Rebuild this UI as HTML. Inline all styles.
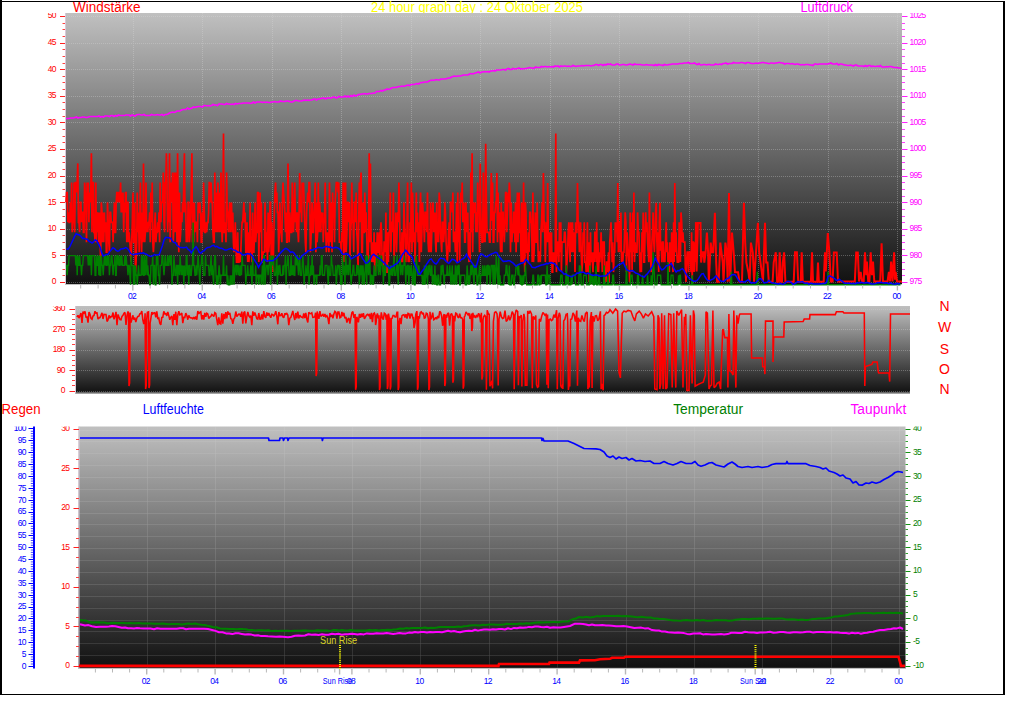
<!DOCTYPE html>
<html lang="de"><head><meta charset="utf-8"><title>24 hour graph day : 24 Oktober 2025</title>
<style>html,body{margin:0;padding:0;background:#fff}svg{display:block}text{font-family:"Liberation Sans", Arial, sans-serif}</style>
</head><body>
<svg width="1024" height="705" viewBox="0 0 1024 705">
<defs>
<linearGradient id="g1" x1="0" y1="0" x2="0" y2="1"><stop offset="0" stop-color="#c0c0c0"/><stop offset="1" stop-color="#101010"/></linearGradient>
<clipPath id="c1"><rect x="65" y="13" width="837" height="273.2"/></clipPath>
<clipPath id="c2"><rect x="75" y="306" width="835" height="88"/></clipPath>
<clipPath id="c3"><rect x="78.5" y="426" width="827" height="243"/></clipPath>
</defs>
<rect width="1024" height="705" fill="#fff"/>
<rect x="0" y="0" width="2" height="695" fill="#000"/>
<rect x="0" y="1" width="1005" height="1" fill="#000"/>
<rect x="1003" y="1" width="2" height="694" fill="#000"/>
<rect x="0" y="694" width="1005" height="1" fill="#000"/>
<text x="73" y="12" fill="#ff0000" font-size="14" text-anchor="start" textLength="67.5" lengthAdjust="spacingAndGlyphs">Windstärke</text>
<text x="371" y="12" fill="#ffff00" font-size="14" text-anchor="start" textLength="212" lengthAdjust="spacingAndGlyphs">24 hour graph day : 24 Oktober 2025</text>
<text x="800.5" y="12" fill="#ff00ff" font-size="14" text-anchor="start" textLength="52.5" lengthAdjust="spacingAndGlyphs">Luftdruck</text>
<rect x="65" y="13" width="837" height="271.5" fill="url(#g1)"/>
<g stroke="#e0e0e0" stroke-width="1" stroke-dasharray="1 1" opacity="0.3">
<line x1="65" y1="282.5" x2="902" y2="282.5"/>
<line x1="65" y1="255.5" x2="902" y2="255.5"/>
<line x1="65" y1="229.5" x2="902" y2="229.5"/>
<line x1="65" y1="202.5" x2="902" y2="202.5"/>
<line x1="65" y1="176.5" x2="902" y2="176.5"/>
<line x1="65" y1="149.5" x2="902" y2="149.5"/>
<line x1="65" y1="122.5" x2="902" y2="122.5"/>
<line x1="65" y1="96.5" x2="902" y2="96.5"/>
<line x1="65" y1="69.5" x2="902" y2="69.5"/>
<line x1="65" y1="43.5" x2="902" y2="43.5"/>
<line x1="65" y1="16.5" x2="902" y2="16.5"/>
<line x1="133.5" y1="13" x2="133.5" y2="284.5"/>
<line x1="202.5" y1="13" x2="202.5" y2="284.5"/>
<line x1="272.5" y1="13" x2="272.5" y2="284.5"/>
<line x1="341.5" y1="13" x2="341.5" y2="284.5"/>
<line x1="411.5" y1="13" x2="411.5" y2="284.5"/>
<line x1="480.5" y1="13" x2="480.5" y2="284.5"/>
<line x1="550.5" y1="13" x2="550.5" y2="284.5"/>
<line x1="619.5" y1="13" x2="619.5" y2="284.5"/>
<line x1="689.5" y1="13" x2="689.5" y2="284.5"/>
<line x1="758.5" y1="13" x2="758.5" y2="284.5"/>
<line x1="828.5" y1="13" x2="828.5" y2="284.5"/>
<line x1="897.5" y1="13" x2="897.5" y2="284.5"/>
</g>
<line x1="65.5" y1="13" x2="65.5" y2="284.5" stroke="#d8c8d8" stroke-width="1"/>
<line x1="65" y1="284.5" x2="902" y2="284.5" stroke="#c0c0c0" stroke-width="1"/>
<g clip-path="url(#c1)" fill="none" stroke-linejoin="miter" stroke-miterlimit="3">
<polyline points="66,118.5 67.5,118.5 69,118.5 70.5,118 72,118 73.5,118 75,117.5 76.5,117 78,118 79.5,117.5 81,117.5 82.5,117 84,117 85.5,117.5 87,117.5 88.5,117 90,116.5 91.5,116.5 93,116.5 94.5,116.5 96,116.5 97.5,116.5 99,116 100.5,117 102,116.5 103.5,117 105,116 106.5,116 108,116 109.5,116.5 111,115.5 112.5,115.5 114,116.5 115.5,115.5 117,116 118.5,115 120,115.5 121.5,115.5 123,115.5 124.5,115.5 126,115 127.5,115 129,115 130.5,116 132,115 133.5,115.5 135,116 136.5,115 138,114.5 139.5,114.5 141,115 142.5,115 144,114.5 145.5,115.5 147,115.5 148.5,115.5 150,115.5 151.5,114.5 153,115 154.5,115 156,115 157.5,114.5 159,115 160.5,115 162,114.5 163.5,115.5 165,114.5 166.5,114.5 168,114 169.5,113 171,112.5 172.5,112 174,112.5 175.5,112 177,111 178.5,111 180,111 181.5,110 183,109.5 184.5,109.5 186,109.5 187.5,108 189,109 190.5,108.5 192,108 193.5,107 195,107.5 196.5,107 198,106.5 199.5,106.5 201,106.5 202.5,107 204,105.5 205.5,105.5 207,106 208.5,105.5 210,106 211.5,105.5 213,104.5 214.5,105 216,105 217.5,105.5 219,104 220.5,104 222,104 223.5,104.5 225,104.5 226.5,103.5 228,104 229.5,104 231,104.5 232.5,104 234,104.5 235.5,103.5 237,104 238.5,103.5 240,103.5 241.5,103.5 243,103 244.5,103 246,103 247.5,103 249,103 250.5,103.5 252,103 253.5,102 255,103 256.5,102 258,102 259.5,102 261,102 262.5,102.5 264,102 265.5,102.5 267,102 268.5,102.5 270,102.5 271.5,102 273,102 274.5,101.5 276,102 277.5,102 279,102 280.5,101 282,101.5 283.5,101.5 285,101.5 286.5,101 288,101 289.5,101.5 291,102 292.5,102 294,101 295.5,100.5 297,100.5 298.5,101 300,101 301.5,101 303,100.5 304.5,100 306,100.5 307.5,100 309,100.5 310.5,100 312,100 313.5,99 315,99 316.5,100 318,99 319.5,99 321,98.5 322.5,98 324,98 325.5,99 327,98 328.5,98 330,98 331.5,98 333,97 334.5,97 336,98 337.5,97.5 339,96.5 340.5,97 342,97 343.5,97 345,96 346.5,97 348,96 349.5,97 351,95.5 352.5,96.5 354,95 355.5,96 357,95.5 358.5,94.5 360,94.5 361.5,94 363,94 364.5,93.5 366,94 367.5,94 369,93.5 370.5,93.5 372,93.5 373.5,93 375,93 376.5,91.5 378,91.5 379.5,91.5 381,90.5 382.5,91 384,90 385.5,90 387,89 388.5,89.5 390,89 391.5,88 393,87.5 394.5,87.5 396,87.5 397.5,87 399,86.5 400.5,86.5 402,86 403.5,86.5 405,86 406.5,85.5 408,85 409.5,85.5 411,84.5 412.5,84.5 414,84.5 415.5,84 417,83.5 418.5,84 420,83 421.5,82.5 423,82.5 424.5,82 426,82 427.5,82 429,81 430.5,80.5 432,80 433.5,80.5 435,80 436.5,79.5 438,80 439.5,80 441,79 442.5,79 444,79 445.5,79 447,78.5 448.5,78 450,78 451.5,77 453,76.5 454.5,76 456,76.5 457.5,76 459,76 460.5,76 462,75.5 463.5,75 465,75 466.5,75 468,75 469.5,74 471,73.5 472.5,74 474,73.5 475.5,73 477,72.5 478.5,72 480,73 481.5,72 483,72 484.5,71.5 486,72 487.5,71.5 489,72 490.5,71 492,71 493.5,70.5 495,71 496.5,70 498,70 499.5,70 501,70 502.5,69.5 504,69.5 505.5,70 507,69 508.5,68.5 510,69.5 511.5,69.5 513,68.5 514.5,69 516,69 517.5,68.5 519,68 520.5,69 522,68.5 523.5,69 525,68.5 526.5,68.5 528,68 529.5,67.5 531,68 532.5,68 534,68.5 535.5,67 537,67.5 538.5,67.5 540,67.5 541.5,66.5 543,67 544.5,66.5 546,66.5 547.5,67 549,66.5 550.5,67 552,66.5 553.5,67 555,66 556.5,66.5 558,66 559.5,67 561,66 562.5,66.5 564,66 565.5,66 567,66.5 568.5,66 570,66.5 571.5,66.5 573,65.5 574.5,66 576,66.5 577.5,66 579,66 580.5,66 582,65.5 583.5,66 585,65.5 586.5,65.5 588,65.5 589.5,65.5 591,66 592.5,65.5 594,65.5 595.5,64.5 597,64.5 598.5,65.5 600,64.5 601.5,64.5 603,65.5 604.5,64.5 606,65 607.5,64 609,64.5 610.5,64 612,65 613.5,65 615,65 616.5,64 618,64 619.5,65 621,65 622.5,64.5 624,64.5 625.5,65 627,65 628.5,64.5 630,64 631.5,64.5 633,65 634.5,64 636,64.5 637.5,64.5 639,64.5 640.5,64.5 642,65 643.5,65 645,65 646.5,64.5 648,65 649.5,65 651,65 652.5,65 654,65.5 655.5,64.5 657,65.5 658.5,64.5 660,65 661.5,65 663,65.5 664.5,64.5 666,65 667.5,65 669,64.5 670.5,64.5 672,64 673.5,64 675,64 676.5,64 678,64 679.5,63.5 681,63.5 682.5,63.5 684,63 685.5,63 687,63 688.5,62.5 690,63.5 691.5,63.5 693,63.5 694.5,63 696,64 697.5,64.5 699,63.5 700.5,65 702,65 703.5,64.5 705,64.5 706.5,65 708,64.5 709.5,64.5 711,65 712.5,65 714,65 715.5,64 717,64.5 718.5,64.5 720,64 721.5,64.5 723,63.5 724.5,63.5 726,63 727.5,64 729,63.5 730.5,63.5 732,63.5 733.5,62.5 735,63 736.5,63 738,63 739.5,63 741,62.5 742.5,62.5 744,63 745.5,63.5 747,62.5 748.5,62.5 750,63 751.5,63.5 753,63.5 754.5,63.5 756,63 757.5,63.5 759,63 760.5,63 762,62.5 763.5,62.5 765,63 766.5,63 768,63.5 769.5,63.5 771,63 772.5,63 774,63.5 775.5,63 777,63 778.5,62.5 780,62.5 781.5,63 783,63 784.5,64 786,63.5 787.5,63.5 789,63.5 790.5,64 792,63.5 793.5,64 795,64.5 796.5,64 798,64 799.5,64.5 801,65 802.5,64.5 804,65 805.5,64.5 807,64.5 808.5,64.5 810,65 811.5,65 813,65.5 814.5,64 816,64 817.5,64.5 819,64 820.5,64 822,64 823.5,64 825,64 826.5,64 828,64 829.5,63.5 831,63 832.5,64 834,64 835.5,64 837,63.5 838.5,65 840,64 841.5,64 843,64.5 844.5,65 846,65 847.5,65.5 849,65.5 850.5,65 852,65.5 853.5,66 855,65 856.5,65 858,66 859.5,66 861,66 862.5,66 864,66.5 865.5,65.5 867,66.5 868.5,65.5 870,65.5 871.5,66.5 873,66 874.5,66.5 876,66.5 877.5,66 879,66.5 880.5,65.5 882,67 883.5,67 885,67 886.5,66.5 888,67 889.5,66.5 891,66.5 892.5,67 894,67.5 895.5,67.5 897,67.5 898.5,68 900,68 901.5,68.5" stroke="#ff00ff" stroke-width="1.6"/>
<polyline points="66,202.4 66.6,192.5 67.2,192.5 67.9,222.3 68.5,212.4 69.1,222.3 69.7,222.3 70.3,202.4 71,222.3 71.6,182.5 72.2,232.3 72.8,222.3 73.4,222.3 74.1,182.5 74.7,232.3 75.3,182.5 75.9,182.5 76.5,192.5 77.2,182.5 77.8,163.4 78.4,222.3 79,222.3 79.6,232.3 80.3,202.4 80.9,202.4 81.5,222.3 82.1,212.4 82.7,212.4 83.4,232.3 84,232.3 84.6,182.5 85.2,192.5 85.8,202.4 86.5,242.2 87.1,182.5 87.7,202.4 88.3,182.5 88.9,222.3 89.6,192.5 90.2,202.4 90.8,192.5 91.4,153.3 92,232.3 92.7,182.5 93.3,182.5 93.9,232.3 94.5,232.3 95.1,242.2 95.8,182.5 96.4,242.2 97,212.4 97.6,232.3 98.2,212.4 98.9,242.2 99.5,212.4 100.1,242.2 100.7,262.1 101.3,202.4 102,212.4 102.6,242.2 103.2,212.4 103.8,242.2 104.4,212.4 105.1,232.3 105.7,222.3 106.3,252.2 106.9,252.2 107.5,202.4 108.2,222.3 108.8,242.2 109.4,252.2 110,212.4 110.6,212.4 111.3,222.3 111.9,222.3 112.5,222.3 113.1,242.2 113.7,222.3 114.4,202.4 115,232.3 115.6,232.3 116.2,202.4 116.8,192.5 117.5,192.5 118.1,202.4 118.7,192.5 119.3,192.5 119.9,202.4 120.6,182.5 121.2,212.4 121.8,192.5 122.4,212.4 123,192.5 123.7,232.3 124.3,202.4 124.9,212.4 125.5,192.5 126.1,192.5 126.8,242.2 127.4,202.4 128,202.4 128.6,242.2 129.2,232.3 129.9,242.2 130.5,252.2 131.1,262.1 131.7,242.2 132.3,222.3 133,192.5 133.6,242.2 134.2,242.2 134.8,202.4 135.4,272.1 136.1,262.1 136.7,242.2 137.3,192.5 137.9,232.3 138.5,212.4 139.2,252.2 139.8,222.3 140.4,182.5 141,232.3 141.6,252.2 142.3,212.4 142.9,242.2 143.5,163.4 144.1,232.3 144.7,242.2 145.4,232.3 146,182.5 146.6,232.3 147.2,222.3 147.8,232.3 148.5,222.3 149.1,222.3 149.7,212.4 150.3,242.2 150.9,192.5 151.6,222.3 152.2,182.5 152.8,242.2 153.4,252.2 154,242.2 154.7,222.3 155.3,212.4 155.9,242.2 156.5,232.3 157.1,232.3 157.8,222.3 158.4,232.3 159,212.4 159.6,242.2 160.2,182.5 160.9,222.3 161.5,202.4 162.1,202.4 162.7,202.4 163.3,172.6 164,222.3 164.6,232.3 165.2,182.5 165.8,182.5 166.4,153.3 167.1,192.5 167.7,232.3 168.3,202.4 168.9,222.3 169.5,153.3 170.2,242.2 170.8,182.5 171.4,202.4 172,192.5 172.6,172.6 173.3,242.2 173.9,222.3 174.5,172.6 175.1,232.3 175.7,172.6 176.4,202.4 177,242.2 177.6,153.3 178.2,222.3 178.8,252.2 179.5,192.5 180.1,242.2 180.7,232.3 181.3,212.4 181.9,222.3 182.6,202.4 183.2,212.4 183.8,182.5 184.4,153.3 185,212.4 185.7,202.4 186.3,242.2 186.9,232.3 187.5,242.2 188.1,202.4 188.8,202.4 189.4,242.2 190,232.3 190.6,212.4 191.2,192.5 191.9,153.3 192.5,242.2 193.1,202.4 193.7,242.2 194.3,202.4 195,232.3 195.6,222.3 196.2,222.3 196.8,222.3 197.4,242.2 198.1,202.4 198.7,212.4 199.3,212.4 199.9,202.4 200.5,212.4 201.2,242.2 201.8,242.2 202.4,212.4 203,232.3 203.6,182.5 204.3,212.4 204.9,232.3 205.5,232.3 206.1,222.3 206.7,232.3 207.4,222.3 208,222.3 208.6,212.4 209.2,182.5 209.8,182.5 210.5,202.4 211.1,182.5 211.7,202.4 212.3,202.4 212.9,232.3 213.6,242.2 214.2,242.2 214.8,172.6 215.4,222.3 216,232.3 216.7,192.5 217.3,232.3 217.9,182.5 218.5,212.4 219.1,232.3 219.8,192.5 220.4,232.3 221,172.6 221.6,222.3 222.2,242.2 222.9,212.4 223.5,133.6 224.1,232.3 224.7,232.3 225.3,222.3 226,242.2 226.6,172.6 227.2,212.4 227.8,212.4 228.4,232.3 229.1,212.4 229.7,202.4 230.3,232.3 230.9,212.4 231.5,202.4 232.2,232.3 232.8,212.4 233.4,242.2 234,252.2 234.6,242.2 235.3,222.3 235.9,242.2 236.5,262.1 237.1,262.1 237.7,232.3 238.4,262.1 239,262.1 239.6,252.2 240.2,262.1 240.8,252.2 241.5,232.3 242.1,222.3 242.7,222.3 243.3,212.4 243.9,202.4 244.6,222.3 245.2,212.4 245.8,252.2 246.4,252.2 247,222.3 247.7,262.1 248.3,232.3 248.9,262.1 249.5,252.2 250.1,202.4 250.8,252.2 251.4,242.2 252,262.1 252.6,212.4 253.2,252.2 253.9,252.2 254.5,232.3 255.1,202.4 255.7,242.2 256.3,232.3 257,232.3 257.6,192.5 258.2,192.5 258.8,262.1 259.4,232.3 260.1,192.5 260.7,232.3 261.3,202.4 261.9,262.1 262.5,262.1 263.2,252.2 263.8,252.2 264.4,252.2 265,202.4 265.6,222.3 266.3,252.2 266.9,232.3 267.5,262.1 268.1,212.4 268.7,252.2 269.4,242.2 270,202.4 270.6,202.4 271.2,262.1 271.8,222.3 272.5,242.2 273.1,272.1 273.7,242.2 274.3,212.4 274.9,192.5 275.6,182.5 276.2,202.4 276.8,192.5 277.4,212.4 278,212.4 278.7,252.2 279.3,232.3 279.9,202.4 280.5,232.3 281.1,232.3 281.8,242.2 282.4,202.4 283,182.5 283.6,192.5 284.2,202.4 284.9,212.4 285.5,232.3 286.1,212.4 286.7,242.2 287.3,242.2 288,163.4 288.6,202.4 289.2,242.2 289.8,212.4 290.4,222.3 291.1,232.3 291.7,232.3 292.3,182.5 292.9,212.4 293.5,232.3 294.2,212.4 294.8,182.5 295.4,222.3 296,212.4 296.6,232.3 297.3,212.4 297.9,232.3 298.5,242.2 299.1,212.4 299.7,172.9 300.4,212.4 301,202.4 301.6,222.3 302.2,182.5 302.8,192.5 303.5,182.5 304.1,202.4 304.7,222.3 305.3,242.2 305.9,252.2 306.6,212.4 307.2,202.4 307.8,192.5 308.4,202.4 309,182.5 309.7,182.5 310.3,252.2 310.9,242.2 311.5,222.3 312.1,202.4 312.8,232.3 313.4,232.3 314,212.4 314.6,202.4 315.2,182.5 315.9,252.2 316.5,202.4 317.1,242.2 317.7,232.3 318.3,182.5 319,232.3 319.6,202.4 320.2,212.4 320.8,232.3 321.4,212.4 322.1,222.3 322.7,212.4 323.3,242.2 323.9,222.3 324.5,222.3 325.2,182.5 325.8,232.3 326.4,252.2 327,232.3 327.6,242.2 328.3,232.3 328.9,252.2 329.5,182.5 330.1,222.3 330.7,242.2 331.4,202.4 332,252.2 332.6,192.5 333.2,212.4 333.8,202.4 334.5,242.2 335.1,202.4 335.7,192.5 336.3,182.5 336.9,182.5 337.6,182.5 338.2,192.5 338.8,182.5 339.4,242.2 340,242.2 340.7,242.2 341.3,252.2 341.9,232.3 342.5,242.2 343.1,182.5 343.8,262.1 344.4,182.5 345,252.2 345.6,182.5 346.2,252.2 346.9,232.3 347.5,202.4 348.1,202.4 348.7,222.3 349.3,202.4 350,262.1 350.6,232.3 351.2,222.3 351.8,182.5 352.4,222.3 353.1,222.3 353.7,252.2 354.3,202.4 354.9,202.4 355.5,222.3 356.2,192.5 356.8,232.3 357.4,242.2 358,272.1 358.6,232.3 359.3,182.5 359.9,222.3 360.5,182.5 361.1,172.6 361.7,252.2 362.4,252.2 363,202.4 363.6,232.3 364.2,232.3 364.8,192.5 365.5,232.3 366.1,212.4 366.7,232.3 367.3,262.1 367.9,262.1 368.6,242.2 369.2,153.3 369.8,242.2 370.4,163.4 371,232.3 371.7,262.1 372.3,242.2 372.9,252.2 373.5,262.1 374.1,232.3 374.8,272.1 375.4,242.2 376,262.1 376.6,262.1 377.2,232.3 377.9,252.2 378.5,252.2 379.1,232.3 379.7,272.1 380.3,232.3 381,222.3 381.6,232.3 382.2,262.1 382.8,252.2 383.4,272.1 384.1,242.2 384.7,242.2 385.3,252.2 385.9,212.4 386.5,272.1 387.2,272.1 387.8,232.3 388.4,262.1 389,232.3 389.6,232.3 390.3,192.5 390.9,252.2 391.5,222.3 392.1,222.3 392.7,232.3 393.4,192.5 394,262.1 394.6,242.2 395.2,242.2 395.8,212.4 396.5,252.2 397.1,232.3 397.7,212.4 398.3,222.3 398.9,182.5 399.6,212.4 400.2,252.2 400.8,242.2 401.4,262.1 402,232.3 402.7,262.1 403.3,252.2 403.9,202.4 404.5,222.3 405.1,232.3 405.8,262.1 406.4,242.2 407,232.3 407.6,182.5 408.2,262.1 408.9,252.2 409.5,262.1 410.1,222.3 410.7,242.2 411.3,182.5 412,252.2 412.6,192.5 413.2,222.3 413.8,242.2 414.4,232.3 415.1,262.1 415.7,232.3 416.3,192.5 416.9,232.3 417.5,212.4 418.2,242.2 418.8,222.3 419.4,262.1 420,212.4 420.6,192.5 421.3,252.2 421.9,232.3 422.5,202.4 423.1,212.4 423.7,222.3 424.4,242.2 425,212.4 425.6,212.4 426.2,222.3 426.8,232.3 427.5,192.5 428.1,242.2 428.7,252.2 429.3,232.3 429.9,252.2 430.6,202.4 431.2,252.2 431.8,232.3 432.4,212.4 433,202.4 433.7,232.3 434.3,222.3 434.9,212.4 435.5,242.2 436.1,252.2 436.8,202.4 437.4,242.2 438,222.3 438.6,242.2 439.2,192.5 439.9,202.4 440.5,232.3 441.1,242.2 441.7,252.2 442.3,222.3 443,222.3 443.6,242.2 444.2,232.3 444.8,202.4 445.4,212.4 446.1,242.2 446.7,252.2 447.3,262.1 447.9,252.2 448.5,232.3 449.2,222.3 449.8,252.2 450.4,202.4 451,202.4 451.6,202.4 452.3,212.4 452.9,192.5 453.5,242.2 454.1,232.3 454.7,232.3 455.4,252.2 456,232.3 456.6,202.4 457.2,262.1 457.8,192.5 458.5,242.2 459.1,232.3 459.7,262.1 460.3,202.4 460.9,192.5 461.6,202.4 462.2,182.5 462.8,222.3 463.4,212.4 464,202.4 464.7,242.2 465.3,242.2 465.9,202.4 466.5,222.3 467.1,232.3 467.8,212.4 468.4,252.2 469,262.1 469.6,232.3 470.2,262.1 470.9,172.6 471.5,232.3 472.1,153.3 472.7,252.2 473.3,202.4 474,212.4 474.6,212.4 475.2,202.4 475.8,232.3 476.4,212.4 477.1,232.3 477.7,182.5 478.3,212.4 478.9,202.4 479.5,252.2 480.2,163.4 480.8,211.2 481.4,232.3 482,242.2 482.6,242.2 483.3,172.6 483.9,242.2 484.5,212.4 485.1,242.2 485.7,143.7 486.4,202.4 487,232.3 487.6,232.3 488.2,232.3 488.8,232.3 489.5,242.2 490.1,242.2 490.7,212.4 491.3,172.9 491.9,220.8 492.6,182.5 493.2,242.2 493.8,242.2 494.4,212.4 495,212.4 495.7,202.4 496.3,202.4 496.9,172.9 497.5,242.2 498.1,192.5 498.8,232.3 499.4,212.4 500,232.3 500.6,252.2 501.2,202.4 501.9,252.2 502.5,212.4 503.1,212.4 503.7,232.3 504.3,242.2 505,222.3 505.6,192.5 506.2,192.5 506.8,232.3 507.4,212.4 508.1,192.5 508.7,202.4 509.3,182.5 509.9,192.5 510.5,252.2 511.2,202.4 511.8,242.2 512.4,232.3 513,232.3 513.6,212.4 514.3,212.4 514.9,242.2 515.5,202.4 516.1,252.2 516.7,222.3 517.4,192.5 518,242.2 518.6,212.4 519.2,192.5 519.8,232.3 520.5,232.3 521.1,262.1 521.7,202.4 522.3,232.3 522.9,262.1 523.6,182.5 524.2,252.2 524.8,272.1 525.4,202.4 526,212.4 526.7,252.2 527.3,252.2 527.9,262.1 528.5,232.3 529.1,252.2 529.8,212.4 530.4,212.4 531,222.3 531.6,222.3 532.2,262.1 532.9,192.6 533.5,262.1 534.1,252.2 534.7,232.3 535.3,212.4 536,242.2 536.6,242.2 537.2,202.4 537.8,242.2 538.4,262.1 539.1,252.2 539.7,252.2 540.3,262.1 540.9,232.3 541.5,222.3 542.2,202.4 542.8,232.3 543.4,172.9 544,220.8 544.6,222.3 545.3,262.1 545.9,242.2 546.5,222.3 547.1,242.2 547.7,183 548.4,242.2 549,232.3 549.6,262.1 550.2,232.3 550.8,262.1 551.5,232.3 552.1,272.1 552.7,272.1 553.3,252.2 553.9,262.1 554.6,252.2 555.2,262.1 555.8,133.6 556.4,272.1 557,252.2 557.7,242.2 558.3,242.2 558.9,262.1 559.5,222.3 560.1,252.2 560.8,222.3 561.4,272.1 562,242.2 562.6,242.2 563.2,242.2 563.9,242.2 564.5,232.3 565.1,232.3 565.7,242.2 566.3,272.1 567,262.1 567.6,252.2 568.2,232.3 568.8,222.3 569.4,242.2 570.1,262.1 570.7,222.3 571.3,232.3 571.9,252.2 572.5,222.3 573.2,252.2 573.8,242.2 574.4,232.3 575,272.1 575.6,222.3 576.3,232.3 576.9,232.3 577.5,183 578.1,222.3 578.7,222.3 579.4,252.2 580,242.2 580.6,222.3 581.2,252.2 581.8,272.1 582.5,262.1 583.1,232.3 583.7,242.2 584.3,222.3 584.9,262.1 585.6,262.1 586.2,272.1 586.8,262.1 587.4,222.3 588,272.1 588.7,242.2 589.3,282 589.9,272.1 590.5,232.3 591.1,262.1 591.8,252.2 592.4,262.1 593,272.1 593.6,252.2 594.2,262.1 594.9,232.3 595.5,232.3 596.1,262.1 596.7,222.3 597.3,272.1 598,242.2 598.6,272.1 599.2,252.2 599.8,262.1 600.4,252.2 601.1,232.3 601.7,252.2 602.3,272.1 602.9,242.2 603.5,242.2 604.2,242.2 604.8,272.1 605.4,272.1 606,282 606.6,262.1 607.3,262.1 607.9,272.1 608.5,252.2 609.1,282 609.7,242.2 610.4,232.3 611,222.3 611.6,242.2 612.2,262.1 612.8,242.2 613.5,272.1 614.1,252.2 614.7,252.2 615.3,222.3 615.9,232.3 616.6,222.3 617.2,242.2 617.8,183 618.4,252.2 619,222.3 619.7,222.3 620.3,252.2 620.9,212.4 621.5,262.1 622.1,252.2 622.8,262.1 623.4,252.2 624,252.2 624.6,232.3 625.2,212.4 625.9,222.3 626.5,272.1 627.1,232.3 627.7,242.2 628.3,252.2 629,262.1 629.6,282 630.2,212.4 630.8,252.2 631.4,222.3 632.1,272.1 632.7,212.4 633.3,252.2 633.9,192.6 634.5,262.1 635.2,242.2 635.8,252.2 636.4,252.2 637,252.2 637.6,212.4 638.3,232.3 638.9,232.3 639.5,252.2 640.1,272.1 640.7,252.2 641.4,272.1 642,232.3 642.6,252.2 643.2,212.4 643.8,262.1 644.5,262.1 645.1,232.3 645.7,212.4 646.3,232.3 646.9,222.3 647.6,242.2 648.2,252.2 648.8,262.1 649.4,192.6 650,242.2 650.7,262.1 651.3,272.1 651.9,242.2 652.5,232.3 653.1,212.4 653.8,242.2 654.4,252.2 655,232.3 655.6,212.4 656.2,202.7 656.9,242.2 657.5,262.1 658.1,232.3 658.7,272.1 659.3,222.3 660,202.7 660.6,250.6 661.2,242.2 661.8,262.1 662.4,242.2 663.1,242.2 663.7,262.1 664.3,252.2 664.9,262.1 665.5,242.2 666.2,222.3 666.8,252.2 667.4,242.2 668,262.1 668.6,252.2 669.3,272.1 669.9,242.2 670.5,252.2 671.1,262.1 671.7,232.3 672.4,252.2 673,272.1 673.6,222.3 674.2,262.1 674.8,183 675.5,252.2 676.1,232.3 676.7,252.2 677.3,262.1 677.9,262.1 678.6,262.1 679.2,222.3 679.8,232.3 680.4,262.1 681,212.4 681.7,222.3 682.3,242.2 682.9,232.3 683.5,242.2 684.1,242.2 684.8,242.2 685.4,272.1 686,282 686.6,262.1 687.2,252.2 687.9,252.2 688.5,272.1 689.1,252.2 689.7,252.2 690.3,252.2 691,272.1 691.6,232.3 692.2,282 692.8,242.2 693.4,242.2 694.1,272.1 694.7,242.2 695.3,262.1 695.9,222.3 696,252.1" stroke="#ff0000" stroke-width="1.7"/>
<polyline points="695.9,222.3 696,252.1 696.6,271.5 697.9,222.9 700.5,222.9 701.1,262.6 702.4,252.3 703.7,252.3 704.3,262.6 705.6,252.3 706.9,232.6 708.1,252.3 708.8,281.7 709.8,262.6 710.7,242.6 712,252.3 713.2,252.3 714.9,212.7 716.2,262.6 717.1,281.7 718.7,281.7 720.3,242.6 721.5,252.3 722.8,262.6 723.5,281.7 725.4,242.6 726.7,252.3 727.7,281.7 729,192.9 730.2,281.7 732,232.6 733.7,252.3 735,272.2 736.2,272.2 738.1,272.2 739.4,281.7 742,281.7 743.9,202.7 745.2,242.6 746.4,262.6 748.4,272.2 749.6,281.7 750.9,242.6 752.8,252.3 754.1,281.7 756,252.3 757.9,222.7 759.2,252.3 760.5,262.6 761.8,272.2 763,281.7 765,222.7 766.2,262.6 767.5,262.6 768.8,281.7 772.6,281.7 773.7,262.6 775.8,252.3 777.1,281.7 778.8,281.7 779.7,252.3 780.9,281.7 782,281.7 782.8,262.6 784.1,252.3 785.4,281.7 793.7,281.7 795,252.3 796.9,252.3 798.2,281.7 800.7,281.7 801.7,252.3 802.8,281.7 810.9,281.7 812,252.3 813,281.7 817.1,281.7 818,262.6 818.9,281.7 823.7,281.7 825,252.3 825.8,271.5 827.8,233.1 829.4,252.4 830.8,281.5 832.6,281.5 833.9,252.4 836.7,252.4 838,281.5 854.8,281.5 856.2,252.4 857.8,252.4 859.1,281.5 860.7,271.8 862.1,281.5 863.7,281.5 865,252.4 866.2,275.2 866.9,261.5 868.2,281.5 869.4,281.5 870.7,252.4 871.9,275.2 873,261.5 874.3,281.5 880.2,281.5 881.6,243.4 883,281.5 887.5,281.5 888.9,271.8 890,281.5 891.1,261.5 892.5,281.5 894.1,252.4 895,279.7 895.7,271.8 897,281.5 902,281.5" stroke="#ff0000" stroke-width="2"/>
<polyline points="66,265.4 66.6,265.4 67.2,275.2 67.9,265.4 68.5,265.4 69.1,255.6 69.7,255.6 70.3,255.6 71,255.6 71.6,255.6 72.2,255.6 72.8,255.6 73.4,255.6 74.1,255.6 74.7,255.6 75.3,255.6 75.9,265.4 76.5,255.6 77.2,275.2 77.8,255.6 78.4,265.4 79,265.4 79.6,255.6 80.3,265.4 80.9,265.4 81.5,275.2 82.1,265.4 82.7,265.4 83.4,255.6 84,255.6 84.6,255.6 85.2,255.6 85.8,255.6 86.5,255.6 87.1,255.6 87.7,255.6 88.3,265.4 88.9,255.6 89.6,265.4 90.2,255.6 90.8,255.6 91.4,275.2 92,255.6 92.7,255.6 93.3,255.6 93.9,255.6 94.5,255.6 95.1,275.2 95.8,275.2 96.4,255.6 97,265.4 97.6,265.4 98.2,255.6 98.9,275.2 99.5,255.6 100.1,275.2 100.7,275.2 101.3,255.6 102,265.4 102.6,265.4 103.2,275.2 103.8,265.4 104.4,255.6 105.1,265.4 105.7,255.6 106.3,265.4 106.9,265.4 107.5,255.6 108.2,265.4 108.8,255.6 109.4,275.2 110,265.4 110.6,265.4 111.3,255.6 111.9,255.6 112.5,265.4 113.1,275.2 113.7,265.4 114.4,265.4 115,255.6 115.6,275.2 116.2,275.2 116.8,255.6 117.5,255.6 118.1,265.4 118.7,255.6 119.3,265.4 119.9,265.4 120.6,255.6 121.2,265.4 121.8,255.6 122.4,265.4 123,265.4 123.7,265.4 124.3,265.4 124.9,255.6 125.5,265.4 126.1,255.6 126.8,265.4 127.4,265.4 128,275.2 128.6,265.4 129.2,265.4 129.9,275.2 130.5,284.7 131.1,255.6 131.7,265.4 132.3,265.4 133,265.4 133.6,284.7 134.2,265.4 134.8,284.7 135.4,265.4 136.1,275.2 136.7,275.2 137.3,284.7 137.9,275.2 138.5,265.4 139.2,275.2 139.8,275.2 140.4,275.2 141,275.2 141.6,255.6 142.3,275.2 142.9,255.6 143.5,275.2 144.1,275.2 144.7,255.6 145.4,275.2 146,265.4 146.6,255.6 147.2,275.2 147.8,265.4 148.5,275.2 149.1,275.2 149.7,284.7 150.3,284.7 150.9,265.4 151.6,265.4 152.2,265.4 152.8,255.6 153.4,284.7 154,265.4 154.7,265.4 155.3,284.7 155.9,284.7 156.5,255.6 157.1,265.4 157.8,255.6 158.4,275.2 159,275.2 159.6,284.7 160.2,265.4 160.9,265.4 161.5,265.4 162.1,255.6 162.7,255.6 163.3,265.4 164,275.2 164.6,265.4 165.2,255.6 165.8,265.4 166.4,265.4 167.1,265.4 167.7,255.6 168.3,265.4 168.9,265.4 169.5,255.6 170.2,255.6 170.8,265.4 171.4,255.6 172,284.7 172.6,275.2 173.3,275.2 173.9,255.6 174.5,265.4 175.1,275.2 175.7,275.2 176.4,265.4 177,265.4 177.6,284.7 178.2,265.4 178.8,265.4 179.5,275.2 180.1,255.6 180.7,265.4 181.3,275.2 181.9,265.4 182.6,275.2 183.2,265.4 183.8,284.7 184.4,265.4 185,275.2 185.7,275.2 186.3,255.6 186.9,255.6 187.5,275.2 188.1,265.4 188.8,284.7 189.4,265.4 190,265.4 190.6,275.2 191.2,275.2 191.9,265.4 192.5,265.4 193.1,222.4 193.7,265.4 194.3,265.4 195,275.2 195.6,275.2 196.2,265.4 196.8,275.2 197.4,265.4 198.1,255.6 198.7,265.4 199.3,275.2 199.9,284.7 200.5,265.4 201.2,265.4 201.8,255.6 202.4,255.6 203,265.4 203.6,275.2 204.3,275.2 204.9,275.2 205.5,255.6 206.1,265.4 206.7,265.4 207.4,265.4 208,265.4 208.6,265.4 209.2,275.2 209.8,275.2 210.5,265.4 211.1,255.6 211.7,275.2 212.3,265.4 212.9,275.2 213.6,284.7 214.2,265.4 214.8,255.6 215.4,255.6 216,275.2 216.7,284.7 217.3,275.2 217.9,284.7 218.5,275.2 219.1,265.4 219.8,275.2 220.4,284.7 221,275.2 221.6,275.2 222.2,275.2 222.9,275.2 223.5,255.6 224.1,275.2 224.7,275.2 225.3,275.2 226,275.2 226.6,265.4 227.2,284.7 227.8,275.2 228.4,284.7 229.1,284.7 229.7,284.7 230.3,275.2 230.9,284.7 231.5,275.2 232.2,284.7 232.8,275.2 233.4,255.6 234,284.7 234.6,275.2 235.3,265.4 235.9,265.4 236.5,275.2 237.1,265.4 237.7,265.4 238.4,275.2 239,265.4 239.6,275.2 240.2,275.2 240.8,265.4 241.5,275.2 242.1,255.6 242.7,265.4 243.3,265.4 243.9,265.4 244.6,265.4 245.2,265.4 245.8,284.7 246.4,275.2 247,275.2 247.7,265.4 248.3,275.2 248.9,275.2 249.5,275.2 250.1,275.2 250.8,265.4 251.4,275.2 252,284.7 252.6,255.6 253.2,275.2 253.9,275.2 254.5,275.2 255.1,275.2 255.7,265.4 256.3,284.7 257,275.2 257.6,275.2 258.2,275.2 258.8,284.7 259.4,275.2 260.1,275.2 260.7,275.2 261.3,284.7 261.9,275.2 262.5,265.4 263.2,284.7 263.8,255.6 264.4,255.6 265,284.7 265.6,275.2 266.3,265.4 266.9,265.4 267.5,265.4 268.1,275.2 268.7,265.4 269.4,265.4 270,255.6 270.6,284.7 271.2,275.2 271.8,255.6 272.5,265.4 273.1,255.6 273.7,265.4 274.3,275.2 274.9,275.2 275.6,275.2 276.2,265.4 276.8,255.6 277.4,284.7 278,265.4 278.7,275.2 279.3,265.4 279.9,265.4 280.5,275.2 281.1,275.2 281.8,275.2 282.4,275.2 283,265.4 283.6,275.2 284.2,265.4 284.9,265.4 285.5,255.6 286.1,284.7 286.7,265.4 287.3,265.4 288,255.6 288.6,265.4 289.2,275.2 289.8,275.2 290.4,275.2 291.1,255.6 291.7,275.2 292.3,265.4 292.9,275.2 293.5,265.4 294.2,275.2 294.8,275.2 295.4,255.6 296,255.6 296.6,265.4 297.3,255.6 297.9,265.4 298.5,275.2 299.1,265.4 299.7,255.6 300.4,275.2 301,275.2 301.6,275.2 302.2,265.4 302.8,255.6 303.5,265.4 304.1,284.7 304.7,275.2 305.3,275.2 305.9,265.4 306.6,275.2 307.2,275.2 307.8,265.4 308.4,255.6 309,284.7 309.7,275.2 310.3,275.2 310.9,265.4 311.5,275.2 312.1,255.6 312.8,275.2 313.4,265.4 314,284.7 314.6,275.2 315.2,275.2 315.9,275.2 316.5,284.7 317.1,275.2 317.7,275.2 318.3,275.2 319,275.2 319.6,275.2 320.2,265.4 320.8,275.2 321.4,255.6 322.1,255.6 322.7,275.2 323.3,275.2 323.9,275.2 324.5,275.2 325.2,265.4 325.8,265.4 326.4,265.4 327,265.4 327.6,275.2 328.3,284.7 328.9,265.4 329.5,275.2 330.1,275.2 330.7,275.2 331.4,255.6 332,265.4 332.6,265.4 333.2,275.2 333.8,275.2 334.5,275.2 335.1,275.2 335.7,265.4 336.3,284.7 336.9,275.2 337.6,265.4 338.2,265.4 338.8,265.4 339.4,275.2 340,265.4 340.7,284.7 341.3,275.2 341.9,284.7 342.5,255.6 343.1,265.4 343.8,275.2 344.4,265.4 345,284.7 345.6,255.6 346.2,265.4 346.9,275.2 347.5,265.4 348.1,265.4 348.7,275.2 349.3,265.4 350,255.6 350.6,275.2 351.2,284.7 351.8,275.2 352.4,275.2 353.1,265.4 353.7,265.4 354.3,275.2 354.9,275.2 355.5,275.2 356.2,275.2 356.8,265.4 357.4,265.4 358,275.2 358.6,265.4 359.3,284.7 359.9,275.2 360.5,265.4 361.1,275.2 361.7,265.4 362.4,284.7 363,265.4 363.6,275.2 364.2,284.7 364.8,275.2 365.5,265.4 366.1,255.6 366.7,284.7 367.3,255.6 367.9,265.4 368.6,275.2 369.2,265.4 369.8,255.6 370.4,284.7 371,275.2 371.7,275.2 372.3,284.7 372.9,275.2 373.5,284.7 374.1,265.4 374.8,275.2 375.4,275.2 376,275.2 376.6,255.6 377.2,265.4 377.9,265.4 378.5,275.2 379.1,255.6 379.7,255.6 380.3,275.2 381,265.4 381.6,255.6 382.2,265.4 382.8,265.4 383.4,284.7 384.1,265.4 384.7,275.2 385.3,275.2 385.9,265.4 386.5,265.4 387.2,265.4 387.8,265.4 388.4,265.4 389,284.7 389.6,284.7 390.3,265.4 390.9,275.2 391.5,265.4 392.1,275.2 392.7,275.2 393.4,265.4 394,255.6 394.6,275.2 395.2,275.2 395.8,275.2 396.5,265.4 397.1,255.6 397.7,275.2 398.3,284.7 398.9,265.4 399.6,265.4 400.2,255.6 400.8,275.2 401.4,265.4 402,265.4 402.7,275.2 403.3,265.4 403.9,265.4 404.5,255.6 405.1,265.4 405.8,284.7 406.4,265.4 407,275.2 407.6,265.4 408.2,265.4 408.9,284.7 409.5,265.4 410.1,275.2 410.7,275.2 411.3,265.4 412,275.2 412.6,284.7 413.2,275.2 413.8,265.4 414.4,284.7 415.1,284.7 415.7,265.4 416.3,255.6 416.9,265.4 417.5,275.2 418.2,275.2 418.8,265.4 419.4,275.2 420,275.2 420.6,275.2 421.3,275.2 421.9,275.2 422.5,284.7 423.1,275.2 423.7,284.7 424.4,265.4 425,284.7 425.6,275.2 426.2,265.4 426.8,275.2 427.5,284.7 428.1,265.4 428.7,275.2 429.3,265.4 429.9,265.4 430.6,275.2 431.2,275.2 431.8,265.4 432.4,284.7 433,275.2 433.7,275.2 434.3,284.7 434.9,265.4 435.5,284.7 436.1,275.2 436.8,284.7 437.4,284.7 438,275.2 438.6,275.2 439.2,284.7 439.9,284.7 440.5,284.7 441.1,265.4 441.7,275.2 442.3,265.4 443,265.4 443.6,275.2 444.2,284.7 444.8,275.2 445.4,275.2 446.1,275.2 446.7,275.2 447.3,265.4 447.9,275.2 448.5,275.2 449.2,275.2 449.8,265.4 450.4,275.2 451,284.7 451.6,275.2 452.3,265.4 452.9,284.7 453.5,275.2 454.1,275.2 454.7,284.7 455.4,265.4 456,275.2 456.6,284.7 457.2,265.4 457.8,275.2 458.5,265.4 459.1,265.4 459.7,284.7 460.3,284.7 460.9,275.2 461.6,275.2 462.2,275.2 462.8,275.2 463.4,275.2 464,275.2 464.7,275.2 465.3,284.7 465.9,284.7 466.5,284.7 467.1,265.4 467.8,275.2 468.4,284.7 469,275.2 469.6,284.7 470.2,275.2 470.9,265.4 471.5,275.2 472.1,265.4 472.7,265.4 473.3,275.2 474,284.7 474.6,265.4 475.2,265.4 475.8,275.2 476.4,265.4 477.1,284.7 477.7,284.7 478.3,275.2 478.9,275.2 479.5,265.4 480.2,284.7 480.8,275.2 481.4,275.2 482,275.2 482.6,265.4 483.3,275.2 483.9,275.2 484.5,265.4 485.1,275.2 485.7,275.2 486.4,265.4 487,284.7 487.6,265.4 488.2,265.4 488.8,275.2 489.5,265.4 490.1,284.7 490.7,275.2 491.3,265.4 491.9,265.4 492.6,265.4 493.2,284.7 493.8,265.4 494.4,265.4 495,284.7 495.7,275.2 496.3,255.6 496.9,265.4 497.5,275.2 498.1,284.7 498.8,255.6 499.4,284.7 500,275.2 500.6,284.7 501.2,284.7 501.9,284.7 502.5,284.7 503.1,284.7 503.7,284.7 504.3,275.2 505,275.2 505.6,275.2 506.2,265.4 506.8,265.4 507.4,275.2 508.1,275.2 508.7,284.7 509.3,265.4 509.9,284.7 510.5,284.7 511.2,284.7 511.8,275.2 512.4,275.2 513,275.2 513.6,284.7 514.3,284.7 514.9,275.2 515.5,275.2 516.1,265.4 516.7,265.4 517.4,265.4 518,275.2 518.6,265.4 519.2,275.2 519.8,275.2 520.5,284.7 521.1,275.2 521.7,284.7 522.3,284.7 522.9,275.2 523.6,284.7 524.2,275.2 524.8,275.2 525.4,265.4 526,275.2 526.7,284.7 527.3,284.7 527.9,284.7 528.5,284.7 529.1,284.7 529.8,284.7 530.4,284.7 531,284.7 531.6,284.7 532.2,284.7 532.9,275.2 533.5,275.2 534.1,284.7 534.7,284.7 535.3,284.7 536,284.7 536.6,284.7 537.2,284.7 537.8,275.2 538.4,275.2 539.1,284.7 539.7,284.7 540.3,275.2 540.9,284.7 541.5,275.2 542.2,275.2 542.8,275.2 543.4,275.2 544,275.2 544.6,275.2 545.3,275.2 545.9,284.7 546.5,284.7 547.1,265.4 547.7,284.7 548.4,275.2 549,275.2 549.6,275.2 550.2,284.7 550.8,284.7 551.5,284.7 552.1,284.7 552.7,284.7 553.3,284.7 553.9,284.7 554.6,284.7 555.2,284.7 555.8,284.7 556.4,284.7 557,284.7 557.7,284.7 558.3,284.7 558.9,284.7 559.5,284.7 560.1,284.7 560.8,275.2 561.4,275.2 562,275.2 562.6,284.7 563.2,284.7 563.9,284.7 564.5,284.7 565.1,284.7 565.7,284.7 566.3,265.4 567,284.7 567.6,275.2 568.2,275.2 568.8,284.7 569.4,284.7 570.1,284.7 570.7,284.7 571.3,275.2 571.9,284.7 572.5,275.2 573.2,275.2 573.8,275.2 574.4,275.2 575,275.2 575.6,284.7 576.3,284.7 576.9,284.7 577.5,284.7 578.1,284.7 578.7,284.7 579.4,265.4 580,275.2 580.6,265.4 581.2,284.7 581.8,284.7 582.5,284.7 583.1,284.7 583.7,275.2 584.3,275.2 584.9,275.2 585.6,275.2 586.2,275.2 586.8,284.7 587.4,284.7 588,284.7 588.7,284.7 589.3,284.7 589.9,265.4 590.5,284.7 591.1,275.2 591.8,275.2 592.4,284.7 593,275.2 593.6,284.7 594.2,284.7 594.9,275.2 595.5,284.7 596.1,265.4 596.7,284.7 597.3,284.7 598,284.7 598.6,275.2 599.2,275.2 599.8,284.7 600.4,284.7 601.1,284.7 601.7,284.7 602.3,284.7 602.9,284.7 603.5,284.7 604.2,265.4 604.8,284.7 605.4,284.7 606,284.7 606.6,284.7 607.3,284.7 607.9,275.2 608.5,284.7 609.1,284.7 609.7,284.7 610.4,284.7 611,284.7 611.6,284.7 612.2,284.7 612.8,275.2 613.5,275.2 614.1,284.7 614.7,284.7 615.3,284.7 615.9,284.7 616.6,284.7 617.2,284.7 617.8,284.7 618.4,284.7 619,284.7 619.7,284.7 620.3,284.7 620.9,284.7 621.5,284.7 622.1,284.7 622.8,284.7 623.4,284.7 624,284.7 624.6,284.7 625.2,284.7 625.9,284.7 626.5,265.4 627.1,284.7 627.7,284.7 628.3,284.7 629,284.7 629.6,284.7 630.2,284.7 630.8,275.2 631.4,275.2 632.1,275.2 632.7,284.7 633.3,284.7 633.9,284.7 634.5,284.7 635.2,284.7 635.8,284.7 636.4,284.7 637,284.7 637.6,275.2 638.3,275.2 638.9,284.7 639.5,284.7 640.1,284.7 640.7,284.7 641.4,284.7 642,284.7 642.6,275.2 643.2,284.7 643.8,284.7 644.5,284.7 645.1,284.7 645.7,284.7 646.3,284.7 646.9,284.7 647.6,275.2 648.2,284.7 648.8,284.7 649.4,284.7 650,284.7 650.7,284.7 651.3,275.2 651.9,284.7 652.5,284.7 653.1,252.2 653.8,265.4 654.4,275.2 655,284.7 655.6,284.7 656.2,284.7 656.9,284.7 657.5,275.2 658.1,275.2 658.7,275.2 659.3,275.2 660,275.2 660.6,275.2 661.2,284.7 661.8,284.7 662.4,284.7 663.1,284.7 663.7,284.7 664.3,284.7 664.9,284.7 665.5,284.7 666.2,284.7 666.8,284.7 667.4,284.7 668,262.3 668.6,284.7 669.3,284.7 669.9,284.7 670.5,284.7 671.1,275.2 671.7,275.2 672.4,275.2 673,275.2 673.6,284.7 674.2,284.7 674.8,284.7 675.5,284.7 676.1,284.7 676.7,284.7 677.3,284.7 677.9,284.7 678.6,275.2 679.2,284.7 679.8,275.2 680.4,275.2 681,284.7 681.7,284.7 682.3,284.7 682.9,284.7 683.5,284.7 684.1,284.7 684.8,284.7 685.4,284.7 686,284.7 686.6,284.7 687.2,284.7 687.9,284.7 688.5,284.7 689.1,284.7 689.7,284.7 690.3,284.7 691,284.7 691.6,284.7 692.2,275.2 692.8,284.7 693.4,284.7 694.1,284.7 694.7,284.7 695.3,284.7 695.9,284.7 696.5,284.7 697.2,284.7 697.8,284.7 698.4,284.7 699,284.7 699.6,284.7 700.3,284.7 700.9,284.7 701.5,284.7 702.1,284.7 702.7,284.7 703.4,284.7 704,284.7 704.6,284.7 705.2,284.7 705.8,284.7 706.5,284.7 707.1,284.7 707.7,284.7 708.3,284.7 708.9,284.7 709.6,284.7 710.2,284.7 710.8,284.7 711.4,284.7 712,284.7 712.7,284.7 713.3,284.7 713.9,284.7 714.5,284.7 715.1,284.7 715.8,284.7 716.4,284.7 717,284.7 717.6,284.7 718.2,284.7 718.9,284.7 719.5,284.7 720.1,284.7 720.7,284.7 721.3,284.7 722,284.7 722.6,284.7 723.2,284.7 723.8,284.7 724.4,284.7 725.1,284.7 725.7,284.7 726.3,284.7 726.9,284.7 727.5,284.7 728.2,284.7 728.8,284.7 729.4,284.7 730,284.7 730.6,284.7 731.3,271.9 731.9,284.7 732.5,284.7 733.1,284.7 733.7,284.7 734.4,284.7 735,284.7 735.6,284.7 736.2,284.7 736.8,284.7 737.5,284.7 738.1,284.7 738.7,284.7 739.3,284.7 739.9,284.7 740.6,284.7 741.2,284.7 741.8,284.7 742.4,284.7 743,284.7 743.7,284.7 744.3,284.7 744.9,284.7 745.5,284.7 746.1,284.7 746.8,284.7 747.4,284.7 748,284.7 748.6,284.7 749.2,284.7 749.9,284.7 750.5,284.7 751.1,284.7 751.7,284.7 752.3,284.7 753,284.7 753.6,284.7 754.2,284.7 754.8,284.7 755.4,284.7 756.1,284.7 756.7,284.7 757.3,271.9 757.9,284.7 758.5,284.7 759.2,284.7 759.8,284.7 760.4,284.7 761,284.7 761.6,284.7 762.3,284.7 762.9,284.7 763.5,284.7 764.1,284.7 764.7,284.7 765.4,284.7 766,284.7 766.6,284.7 767.2,284.7 767.8,284.7 768.5,284.7 769.1,284.7 769.7,284.7 770.3,284.7 770.9,284.7 771.6,284.7 772.2,284.7 772.8,284.7 773.4,284.7 774,284.7 774.7,284.7 775.3,284.7 775.9,284.7 776.5,284.7 777.1,284.7 777.8,284.7 778.4,284.7 779,284.7 779.6,284.7 780.2,284.7 780.9,284.7 781.5,284.7 782.1,284.7 782.7,284.7 783.3,284.7 784,284.7 784.6,284.7 785.2,284.7 785.8,284.7 786.4,284.7 787.1,284.7 787.7,284.7 788.3,284.7 788.9,284.7 789.5,284.7 790.2,284.7 790.8,284.7 791.4,284.7 792,284.7 792.6,284.7 793.3,284.7 793.9,284.7 794.5,284.7 795.1,284.7 795.7,284.7 796.4,284.7 797,284.7 797.6,284.7 798.2,284.7 798.8,284.7 799.5,284.7 800.1,284.7 800.7,284.7 801.3,284.7 801.9,284.7 802.6,284.7 803.2,284.7 803.8,284.7 804.4,284.7 805,284.7 805.7,284.7 806.3,284.7 806.9,284.7 807.5,284.7 808.1,284.7 808.8,284.7 809.4,284.7 810,284.7 810.6,284.7 811.2,284.7 811.9,284.7 812.5,284.7 813.1,284.7 813.7,284.7 814.3,284.7 815,284.7 815.6,284.7 816.2,284.7 816.8,284.7 817.4,284.7 818.1,284.7 818.7,284.7 819.3,284.7 819.9,284.7 820.5,284.7 821.2,284.7 821.8,284.7 822.4,284.7 823,284.7 823.6,284.7 824.3,284.7 824.9,284.7 825.5,284.7 826.1,284.7 826.7,284.7 827.4,284.7 828,271.9 828.6,284.7 829.2,284.7 829.8,284.7 830.5,284.7 831.1,284.7 831.7,284.7 832.3,284.7 832.9,284.7 833.6,284.7 834.2,284.7 834.8,284.7 835.4,284.7 836,284.7 836.7,284.7 837.3,284.7 837.9,284.7 838.5,284.7 839.1,284.7 839.8,284.7 840.4,284.7 841,284.7 841.6,284.7 842.2,284.7 842.9,284.7 843.5,284.7 844.1,284.7 844.7,284.7 845.3,284.7 846,284.7 846.6,284.7 847.2,284.7 847.8,284.7 848.4,284.7 849.1,284.7 849.7,284.7 850.3,284.7 850.9,284.7 851.5,284.7 852.2,284.7 852.8,284.7 853.4,284.7 854,284.7 854.6,284.7 855.3,284.7 855.9,284.7 856.5,284.7 857.1,284.7 857.7,284.7 858.4,284.7 859,284.7 859.6,284.7 860.2,284.7 860.8,284.7 861.5,284.7 862.1,284.7 862.7,284.7 863.3,284.7 863.9,284.7 864.6,284.7 865.2,284.7 865.8,284.7 866.4,284.7 867,284.7 867.7,284.7 868.3,284.7 868.9,284.7 869.5,284.7 870.1,284.7 870.8,284.7 871.4,284.7 872,284.7 872.6,284.7 873.2,284.7 873.9,284.7 874.5,284.7 875.1,284.7 875.7,284.7 876.3,284.7 877,284.7 877.6,284.7 878.2,284.7 878.8,284.7 879.4,284.7 880.1,284.7 880.7,284.7 881.3,284.7 881.9,284.7 882.5,284.7 883.2,284.7 883.8,284.7 884.4,284.7 885,284.7 885.6,284.7 886.3,284.7 886.9,284.7 887.5,284.7 888.1,284.7 888.7,284.7 889.4,284.7 890,284.7 890.6,284.7 891.2,284.7 891.8,284.7 892.5,284.7 893.1,284.7 893.7,284.7 894.3,284.7 894.9,284.7 895.6,284.7 896.2,284.7 896.8,284.7 897.4,284.7 898,284.7 898.7,284.7 899.3,284.7 899.9,284.7 900.5,284.7" stroke="#008000" stroke-width="1.4"/>
<polyline points="66.5,248.8 68.1,249.2 69.7,246.9 71.3,243.5 72.9,240.2 74.5,236.6 76.1,233.8 77.7,234.5 79.3,235 80.9,236.2 82.5,238.5 84.1,238.2 85.7,239.1 87.3,239.3 88.9,241.1 90.5,242 92.1,243.1 93.7,241.8 95.3,239.8 96.9,241 98.5,244.1 100.1,247.1 101.7,252.9 103.3,256 104.9,255.2 106.5,254.4 108.1,254.4 109.7,251.6 111.3,249.7 112.9,247.7 114.5,248.6 116.1,250.5 117.7,251.2 119.3,250.6 120.9,248.9 122.5,248.7 124.1,248.6 125.7,247.5 127.3,248.3 128.9,250.3 130.5,253.3 132.1,254.4 133.7,254.8 135.3,254.1 136.9,254.1 138.5,253.7 140.1,253.3 141.7,253.2 143.3,252.8 144.9,253.7 146.5,254.2 148.1,255.4 149.7,256.1 151.3,256.5 152.9,255.6 154.5,254.5 156.1,255.1 157.7,254.9 159.3,254.4 160.9,250 162.5,245.4 164.1,239.9 165.7,237.3 167.3,237.6 168.9,237.8 170.5,238.2 172.1,240.6 173.7,242.4 175.3,242.7 176.9,245.3 178.5,246.4 180.1,247.5 181.7,247.4 183.3,247.8 184.9,247.6 186.5,247.1 188.1,249.4 189.7,250.3 191.3,252.8 192.9,250.1 194.5,248.5 196.1,246.7 197.7,248.9 199.3,252.4 200.9,253.1 202.5,251.4 204.1,250.8 205.7,248.7 207.3,247.6 208.9,247.3 210.5,246.9 212.1,245.6 213.7,245.3 215.3,246.8 216.9,246.3 218.5,247.5 220.1,248.2 221.7,248.3 223.3,249.2 224.9,250.1 226.5,250.1 228.1,249.4 229.7,248.7 231.3,248.3 232.9,249.7 234.5,250.1 236.1,250.9 237.7,252.2 239.3,252.3 240.9,253.2 242.5,255 244.1,254.8 245.7,254.6 247.3,253.6 248.9,253.9 250.5,254 252.1,255.6 253.7,258.8 255.3,261.4 256.9,263.8 258.5,267.3 260.1,264.5 261.7,262.3 263.3,259.2 264.9,259.4 266.5,261.1 268.1,260.8 269.7,260.4 271.3,260.8 272.9,260.8 274.5,259.3 276.1,258.5 277.7,256.6 279.3,254.3 280.9,252.6 282.5,250.9 284.1,249.4 285.7,248.3 287.3,249.1 288.9,250.5 290.5,252.3 292.1,251.9 293.7,252.7 295.3,254.9 296.9,256.7 298.5,258.9 300.1,258.5 301.7,256.3 303.3,254.8 304.9,253.7 306.5,252.7 308.1,250.7 309.7,250.4 311.3,249.8 312.9,249.9 314.5,248.8 316.1,248.8 317.7,247.5 319.3,247.5 320.9,247.7 322.5,247.9 324.1,247.1 325.7,246.5 327.3,246.5 328.9,247.2 330.5,246.9 332.1,247.9 333.7,248 335.3,247.3 336.9,247.5 338.5,248.4 340.1,249.6 341.7,253.1 343.3,254.5 344.9,253.9 346.5,253.8 348.1,254.2 349.7,256.4 351.3,258.8 352.9,257.9 354.5,256.9 356.1,255.9 357.7,255.6 359.3,253.6 360.9,254.6 362.5,258.3 364.1,260.7 365.7,263.2 367.3,262.9 368.9,261.2 370.5,258.8 372.1,255.4 373.7,254.3 375.3,255.7 376.9,256.8 378.5,258 380.1,259 381.7,260.6 383.3,262.1 384.9,263.4 386.5,265.8 388.1,266.9 389.7,268.6 391.3,266.4 392.9,266.4 394.5,264.9 396.1,264 397.7,262.8 399.3,260.8 400.9,257.7 402.5,254.2 404.1,252.6 405.7,250.3 407.3,252.1 408.9,254.2 410.5,255.6 412.1,257.1 413.7,262.1 415.3,266 416.9,269.8 418.5,274 420.1,274.1 421.7,271.5 423.3,269.8 424.9,267 426.5,264.3 428.1,262 429.7,259.6 431.3,258.9 432.9,261.4 434.5,263.1 436.1,264.1 437.7,262.2 439.3,259.2 440.9,258.1 442.5,258.6 444.1,259 445.7,260.9 447.3,262.5 448.9,263.3 450.5,261.2 452.1,259.2 453.7,259.6 455.3,260.6 456.9,262.6 458.5,262.4 460.1,260.8 461.7,259.1 463.3,258.8 464.9,257 466.5,254.3 468.1,257.2 469.7,259.4 471.3,261.8 472.9,264.2 474.5,267 476.1,267 477.7,261.5 479.3,256.1 480.9,253.9 482.5,254.4 484.1,255.8 485.7,256.8 487.3,256.7 488.9,255.3 490.5,254.5 492.1,253.7 493.7,253.1 495.3,252.3 496.9,252.6 498.5,255.6 500.1,257.7 501.7,259.8 503.3,261.4 504.9,261.3 506.5,261.3 508.1,260.7 509.7,260.8 511.3,261.8 512.9,262.9 514.5,264.6 516.1,266.2 517.7,264.8 519.3,264.3 520.9,263.3 522.5,263 524.1,262.1 525.7,259.6 527.3,260.8 528.9,263 530.5,264.7 532.1,267.4 533.7,267.5 535.3,267.7 536.9,266.7 538.5,266.2 540.1,265.4 541.7,265 543.3,264.8 544.9,264.3 546.5,263.4 548.1,263.8 549.7,262.7 551.3,262.6 552.9,263.2 554.5,263.6 556.1,265.4 557.7,267.3 559.3,270.2 560.9,271 562.5,272.4 564.1,274.2 565.7,273.8 567.3,275.4 568.9,275.7 570.5,276.6 572.1,276.7 573.7,275.4 575.3,274.9 576.9,273 578.5,273.3 580.1,272.1 581.7,272.5 583.3,272 584.9,273.3 586.5,274 588.1,273.2 589.7,273.9 591.3,274.7 592.9,275.4 594.5,275 596.1,275 597.7,275.3 599.3,276 600.9,276.3 602.5,276 604.1,276.1 605.7,276.1 607.3,274.6 608.9,273.2 610.5,271.3 612.1,270.4 613.7,269.7 615.3,267.4 616.9,266.5 618.5,264.6 620.1,264.3 621.7,263.3 623.3,262.1 624.9,266.2 626.5,269.7 628.1,270.4 629.7,271.1 631.3,270.5 632.9,270.8 634.5,272.1 636.1,273.2 637.7,273.6 639.3,274.5 640.9,275.9 642.5,276.2 644.1,277.2 645.7,275.2 647.3,273.9 648.9,271.6 650.5,269.7 652.1,266.8 653.7,263.1 655.3,258.2 656.9,261.3 658.5,263.8 660.1,267.4 661.7,269.9 663.3,269.3 664.9,267.7 666.5,265.8 668.1,265.5 669.7,264.6 671.3,263.5 672.9,266.6 674.5,269.3 676.1,272.1 677.7,270.5 679.3,270.8 680.9,269.3 682.5,268.7 684.1,270.6 685.7,273.5 687.3,275.9 688.9,277.9 690.5,279.2 692.1,280.3 693.7,281.3 695.3,281.3 696.9,280.7 698.5,278.6 700.1,276.1 701.7,273.9 703.3,273.5 704.9,276.5 706.5,279 708.1,280.6 709.7,280.8 711.3,279.7 712.9,279.1 714.5,277.6 716.1,275.9 717.7,277.9 719.3,279.9 720.9,281 722.5,281.2 724.1,281.4 725.7,279.6 727.3,278.6 728.9,278 730.5,276 732.1,274.8 733.7,274.6 735.3,274.9 736.9,277.3 738.5,280.3 740.1,282.1 741.7,281.3 743.3,282 744.9,282 746.5,280.8 748.1,279.7 749.7,281.5 751.3,283.1 752.9,282.5 754.5,282.9 756.1,282.4 757.7,280.4 759.3,278.8 760.9,278.7 762.5,280.5 764.1,282.9 765.7,282.5 767.3,282.3 768.9,280.4 770.5,282 772.1,283 773.7,282.9 775.3,283.6 776.9,283.8 778.5,284.1 780.1,283.3 781.7,284 783.3,284.3 784.9,283.3 786.5,281.9 788.1,281.2 789.7,281.7 791.3,282.3 792.9,284.4 794.5,283.8 796.1,282.9 797.7,281.5 799.3,281.9 800.9,281.9 802.5,281.5 804.1,283.1 805.7,283.3 807.3,283.1 808.9,284.3 810.5,283.2 812.1,283.5 813.7,284.1 815.3,284 816.9,283.9 818.5,284.1 820.1,283.9 821.7,283.7 823.3,283.5 824.9,283.4 826.5,282.4 828.1,276.3 829.7,275.8 831.3,276.6 832.9,277.3 834.5,278.5 836.1,280 837.7,280.6 839.3,279.2 840.9,280.7 842.5,281.3 844.1,283.1 845.7,283.3 847.3,283.2 848.9,283.3 850.5,283.5 852.1,283.8 853.7,283.3 855.3,283.9 856.9,282.9 858.5,283.1 860.1,282.7 861.7,282.4 863.3,283 864.9,283.1 866.5,282.5 868.1,282.7 869.7,283.2 871.3,283.9 872.9,284.1 874.5,283.8 876.1,283.4 877.7,282.5 879.3,282.7 880.9,282.2 882.5,282.7 884.1,283 885.7,282.7 887.3,283 888.9,283.9 890.5,282.8 892.1,283.9 893.7,284.1 895.3,284.2 896.9,283.4 898.5,283.7 900.1,283.8" stroke="#0000ff" stroke-width="1.5"/>
</g>
<g stroke="#ff4040" stroke-width="1">
<line x1="60" y1="282.5" x2="65" y2="282.5" stroke="#ff2020"/>
<line x1="62.5" y1="275.5" x2="65" y2="275.5"/>
<line x1="62.5" y1="269.5" x2="65" y2="269.5"/>
<line x1="62.5" y1="262.5" x2="65" y2="262.5"/>
<line x1="60" y1="255.5" x2="65" y2="255.5" stroke="#ff2020"/>
<line x1="62.5" y1="249.5" x2="65" y2="249.5"/>
<line x1="62.5" y1="242.5" x2="65" y2="242.5"/>
<line x1="62.5" y1="235.5" x2="65" y2="235.5"/>
<line x1="60" y1="229.5" x2="65" y2="229.5" stroke="#ff2020"/>
<line x1="62.5" y1="222.5" x2="65" y2="222.5"/>
<line x1="62.5" y1="216.5" x2="65" y2="216.5"/>
<line x1="62.5" y1="209.5" x2="65" y2="209.5"/>
<line x1="60" y1="202.5" x2="65" y2="202.5" stroke="#ff2020"/>
<line x1="62.5" y1="196.5" x2="65" y2="196.5"/>
<line x1="62.5" y1="189.5" x2="65" y2="189.5"/>
<line x1="62.5" y1="182.5" x2="65" y2="182.5"/>
<line x1="60" y1="176.5" x2="65" y2="176.5" stroke="#ff2020"/>
<line x1="62.5" y1="169.5" x2="65" y2="169.5"/>
<line x1="62.5" y1="162.5" x2="65" y2="162.5"/>
<line x1="62.5" y1="156.5" x2="65" y2="156.5"/>
<line x1="60" y1="149.5" x2="65" y2="149.5" stroke="#ff2020"/>
<line x1="62.5" y1="142.5" x2="65" y2="142.5"/>
<line x1="62.5" y1="136.5" x2="65" y2="136.5"/>
<line x1="62.5" y1="129.5" x2="65" y2="129.5"/>
<line x1="60" y1="122.5" x2="65" y2="122.5" stroke="#ff2020"/>
<line x1="62.5" y1="116.5" x2="65" y2="116.5"/>
<line x1="62.5" y1="109.5" x2="65" y2="109.5"/>
<line x1="62.5" y1="102.5" x2="65" y2="102.5"/>
<line x1="60" y1="96.5" x2="65" y2="96.5" stroke="#ff2020"/>
<line x1="62.5" y1="89.5" x2="65" y2="89.5"/>
<line x1="62.5" y1="82.5" x2="65" y2="82.5"/>
<line x1="62.5" y1="76.5" x2="65" y2="76.5"/>
<line x1="60" y1="69.5" x2="65" y2="69.5" stroke="#ff2020"/>
<line x1="62.5" y1="63.5" x2="65" y2="63.5"/>
<line x1="62.5" y1="56.5" x2="65" y2="56.5"/>
<line x1="62.5" y1="49.5" x2="65" y2="49.5"/>
<line x1="60" y1="43.5" x2="65" y2="43.5" stroke="#ff2020"/>
<line x1="62.5" y1="36.5" x2="65" y2="36.5"/>
<line x1="62.5" y1="29.5" x2="65" y2="29.5"/>
<line x1="62.5" y1="23.5" x2="65" y2="23.5"/>
<line x1="60" y1="16.5" x2="65" y2="16.5" stroke="#ff2020"/>
</g>
<text x="55.8" y="284.4" fill="#ff0000" font-size="8.5" text-anchor="end" letter-spacing="-0.7">0</text>
<text x="55.8" y="257.8" fill="#ff0000" font-size="8.5" text-anchor="end" letter-spacing="-0.7">5</text>
<text x="55.8" y="231.2" fill="#ff0000" font-size="8.5" text-anchor="end" letter-spacing="-0.7">10</text>
<text x="55.8" y="204.6" fill="#ff0000" font-size="8.5" text-anchor="end" letter-spacing="-0.7">15</text>
<text x="55.8" y="178" fill="#ff0000" font-size="8.5" text-anchor="end" letter-spacing="-0.7">20</text>
<text x="55.8" y="151.4" fill="#ff0000" font-size="8.5" text-anchor="end" letter-spacing="-0.7">25</text>
<text x="55.8" y="124.8" fill="#ff0000" font-size="8.5" text-anchor="end" letter-spacing="-0.7">30</text>
<text x="55.8" y="98.2" fill="#ff0000" font-size="8.5" text-anchor="end" letter-spacing="-0.7">35</text>
<text x="55.8" y="71.6" fill="#ff0000" font-size="8.5" text-anchor="end" letter-spacing="-0.7">40</text>
<text x="55.8" y="45" fill="#ff0000" font-size="8.5" text-anchor="end" letter-spacing="-0.7">45</text>
<text x="55.8" y="18.4" fill="#ff0000" font-size="8.5" text-anchor="end" letter-spacing="-0.7">50</text>
<g stroke="#ff40ff" stroke-width="1">
<line x1="902" y1="282.5" x2="907.5" y2="282.5" stroke="#ff20ff"/>
<line x1="902" y1="275.5" x2="905" y2="275.5"/>
<line x1="902" y1="269.5" x2="905" y2="269.5"/>
<line x1="902" y1="262.5" x2="905" y2="262.5"/>
<line x1="902" y1="255.5" x2="907.5" y2="255.5" stroke="#ff20ff"/>
<line x1="902" y1="249.5" x2="905" y2="249.5"/>
<line x1="902" y1="242.5" x2="905" y2="242.5"/>
<line x1="902" y1="235.5" x2="905" y2="235.5"/>
<line x1="902" y1="229.5" x2="907.5" y2="229.5" stroke="#ff20ff"/>
<line x1="902" y1="222.5" x2="905" y2="222.5"/>
<line x1="902" y1="216.5" x2="905" y2="216.5"/>
<line x1="902" y1="209.5" x2="905" y2="209.5"/>
<line x1="902" y1="202.5" x2="907.5" y2="202.5" stroke="#ff20ff"/>
<line x1="902" y1="196.5" x2="905" y2="196.5"/>
<line x1="902" y1="189.5" x2="905" y2="189.5"/>
<line x1="902" y1="182.5" x2="905" y2="182.5"/>
<line x1="902" y1="176.5" x2="907.5" y2="176.5" stroke="#ff20ff"/>
<line x1="902" y1="169.5" x2="905" y2="169.5"/>
<line x1="902" y1="162.5" x2="905" y2="162.5"/>
<line x1="902" y1="156.5" x2="905" y2="156.5"/>
<line x1="902" y1="149.5" x2="907.5" y2="149.5" stroke="#ff20ff"/>
<line x1="902" y1="142.5" x2="905" y2="142.5"/>
<line x1="902" y1="136.5" x2="905" y2="136.5"/>
<line x1="902" y1="129.5" x2="905" y2="129.5"/>
<line x1="902" y1="122.5" x2="907.5" y2="122.5" stroke="#ff20ff"/>
<line x1="902" y1="116.5" x2="905" y2="116.5"/>
<line x1="902" y1="109.5" x2="905" y2="109.5"/>
<line x1="902" y1="102.5" x2="905" y2="102.5"/>
<line x1="902" y1="96.5" x2="907.5" y2="96.5" stroke="#ff20ff"/>
<line x1="902" y1="89.5" x2="905" y2="89.5"/>
<line x1="902" y1="82.5" x2="905" y2="82.5"/>
<line x1="902" y1="76.5" x2="905" y2="76.5"/>
<line x1="902" y1="69.5" x2="907.5" y2="69.5" stroke="#ff20ff"/>
<line x1="902" y1="63.5" x2="905" y2="63.5"/>
<line x1="902" y1="56.5" x2="905" y2="56.5"/>
<line x1="902" y1="49.5" x2="905" y2="49.5"/>
<line x1="902" y1="43.5" x2="907.5" y2="43.5" stroke="#ff20ff"/>
<line x1="902" y1="36.5" x2="905" y2="36.5"/>
<line x1="902" y1="29.5" x2="905" y2="29.5"/>
<line x1="902" y1="23.5" x2="905" y2="23.5"/>
<line x1="902" y1="16.5" x2="907.5" y2="16.5" stroke="#ff20ff"/>
</g>
<text x="909.5" y="284.4" fill="#ff00ff" font-size="8.5" text-anchor="start" letter-spacing="-0.7">975</text>
<text x="909.5" y="257.8" fill="#ff00ff" font-size="8.5" text-anchor="start" letter-spacing="-0.7">980</text>
<text x="909.5" y="231.2" fill="#ff00ff" font-size="8.5" text-anchor="start" letter-spacing="-0.7">985</text>
<text x="909.5" y="204.6" fill="#ff00ff" font-size="8.5" text-anchor="start" letter-spacing="-0.7">990</text>
<text x="909.5" y="178" fill="#ff00ff" font-size="8.5" text-anchor="start" letter-spacing="-0.7">995</text>
<text x="909.5" y="151.4" fill="#ff00ff" font-size="8.5" text-anchor="start" letter-spacing="-0.7">1000</text>
<text x="909.5" y="124.8" fill="#ff00ff" font-size="8.5" text-anchor="start" letter-spacing="-0.7">1005</text>
<text x="909.5" y="98.2" fill="#ff00ff" font-size="8.5" text-anchor="start" letter-spacing="-0.7">1010</text>
<text x="909.5" y="71.6" fill="#ff00ff" font-size="8.5" text-anchor="start" letter-spacing="-0.7">1015</text>
<text x="909.5" y="45" fill="#ff00ff" font-size="8.5" text-anchor="start" letter-spacing="-0.7">1020</text>
<text x="909.5" y="18.4" fill="#ff00ff" font-size="8.5" text-anchor="start" letter-spacing="-0.7">1025</text>
<rect x="40" y="8" width="20" height="5" fill="#fff"/>
<rect x="908" y="8" width="22" height="5" fill="#fff"/>
<g stroke="#b8b8b8" stroke-width="1.4">
<line x1="80.7" y1="285" x2="80.7" y2="288.5" stroke-width="1"/>
<line x1="98.1" y1="285" x2="98.1" y2="288.5" stroke-width="1"/>
<line x1="115.4" y1="285" x2="115.4" y2="288.5" stroke-width="1"/>
<line x1="132.8" y1="285" x2="132.8" y2="290.5"/>
<line x1="150.2" y1="285" x2="150.2" y2="288.5" stroke-width="1"/>
<line x1="167.6" y1="285" x2="167.6" y2="288.5" stroke-width="1"/>
<line x1="184.9" y1="285" x2="184.9" y2="288.5" stroke-width="1"/>
<line x1="202.3" y1="285" x2="202.3" y2="290.5"/>
<line x1="219.7" y1="285" x2="219.7" y2="288.5" stroke-width="1"/>
<line x1="237.1" y1="285" x2="237.1" y2="288.5" stroke-width="1"/>
<line x1="254.5" y1="285" x2="254.5" y2="288.5" stroke-width="1"/>
<line x1="271.8" y1="285" x2="271.8" y2="290.5"/>
<line x1="289.2" y1="285" x2="289.2" y2="288.5" stroke-width="1"/>
<line x1="306.6" y1="285" x2="306.6" y2="288.5" stroke-width="1"/>
<line x1="324" y1="285" x2="324" y2="288.5" stroke-width="1"/>
<line x1="341.3" y1="285" x2="341.3" y2="290.5"/>
<line x1="358.7" y1="285" x2="358.7" y2="288.5" stroke-width="1"/>
<line x1="376.1" y1="285" x2="376.1" y2="288.5" stroke-width="1"/>
<line x1="393.5" y1="285" x2="393.5" y2="288.5" stroke-width="1"/>
<line x1="410.9" y1="285" x2="410.9" y2="290.5"/>
<line x1="428.2" y1="285" x2="428.2" y2="288.5" stroke-width="1"/>
<line x1="445.6" y1="285" x2="445.6" y2="288.5" stroke-width="1"/>
<line x1="463" y1="285" x2="463" y2="288.5" stroke-width="1"/>
<line x1="480.4" y1="285" x2="480.4" y2="290.5"/>
<line x1="497.7" y1="285" x2="497.7" y2="288.5" stroke-width="1"/>
<line x1="515.1" y1="285" x2="515.1" y2="288.5" stroke-width="1"/>
<line x1="532.5" y1="285" x2="532.5" y2="288.5" stroke-width="1"/>
<line x1="549.9" y1="285" x2="549.9" y2="290.5"/>
<line x1="567.2" y1="285" x2="567.2" y2="288.5" stroke-width="1"/>
<line x1="584.6" y1="285" x2="584.6" y2="288.5" stroke-width="1"/>
<line x1="602" y1="285" x2="602" y2="288.5" stroke-width="1"/>
<line x1="619.4" y1="285" x2="619.4" y2="290.5"/>
<line x1="636.8" y1="285" x2="636.8" y2="288.5" stroke-width="1"/>
<line x1="654.1" y1="285" x2="654.1" y2="288.5" stroke-width="1"/>
<line x1="671.5" y1="285" x2="671.5" y2="288.5" stroke-width="1"/>
<line x1="688.9" y1="285" x2="688.9" y2="290.5"/>
<line x1="706.3" y1="285" x2="706.3" y2="288.5" stroke-width="1"/>
<line x1="723.6" y1="285" x2="723.6" y2="288.5" stroke-width="1"/>
<line x1="741" y1="285" x2="741" y2="288.5" stroke-width="1"/>
<line x1="758.4" y1="285" x2="758.4" y2="290.5"/>
<line x1="775.8" y1="285" x2="775.8" y2="288.5" stroke-width="1"/>
<line x1="793.2" y1="285" x2="793.2" y2="288.5" stroke-width="1"/>
<line x1="810.5" y1="285" x2="810.5" y2="288.5" stroke-width="1"/>
<line x1="827.9" y1="285" x2="827.9" y2="290.5"/>
<line x1="845.3" y1="285" x2="845.3" y2="288.5" stroke-width="1"/>
<line x1="862.7" y1="285" x2="862.7" y2="288.5" stroke-width="1"/>
<line x1="880" y1="285" x2="880" y2="288.5" stroke-width="1"/>
<line x1="897.4" y1="285" x2="897.4" y2="290.5"/>
</g>
<text x="132" y="299.2" fill="#0000ff" font-size="8.5" text-anchor="middle" letter-spacing="-0.7">02</text>
<text x="201.5" y="299.2" fill="#0000ff" font-size="8.5" text-anchor="middle" letter-spacing="-0.7">04</text>
<text x="271" y="299.2" fill="#0000ff" font-size="8.5" text-anchor="middle" letter-spacing="-0.7">06</text>
<text x="340.5" y="299.2" fill="#0000ff" font-size="8.5" text-anchor="middle" letter-spacing="-0.7">08</text>
<text x="410.1" y="299.2" fill="#0000ff" font-size="8.5" text-anchor="middle" letter-spacing="-0.7">10</text>
<text x="479.6" y="299.2" fill="#0000ff" font-size="8.5" text-anchor="middle" letter-spacing="-0.7">12</text>
<text x="549.1" y="299.2" fill="#0000ff" font-size="8.5" text-anchor="middle" letter-spacing="-0.7">14</text>
<text x="618.6" y="299.2" fill="#0000ff" font-size="8.5" text-anchor="middle" letter-spacing="-0.7">16</text>
<text x="688.1" y="299.2" fill="#0000ff" font-size="8.5" text-anchor="middle" letter-spacing="-0.7">18</text>
<text x="757.6" y="299.2" fill="#0000ff" font-size="8.5" text-anchor="middle" letter-spacing="-0.7">20</text>
<text x="827.1" y="299.2" fill="#0000ff" font-size="8.5" text-anchor="middle" letter-spacing="-0.7">22</text>
<text x="896.6" y="299.2" fill="#0000ff" font-size="8.5" text-anchor="middle" letter-spacing="-0.7">00</text>
<rect x="75" y="306" width="835" height="87.5" fill="url(#g1)"/>
<g stroke="#e0e0e0" stroke-width="1" stroke-dasharray="1 1" opacity="0.3">
<line x1="75" y1="391.5" x2="910" y2="391.5"/>
<line x1="75" y1="370.5" x2="910" y2="370.5"/>
<line x1="75" y1="350.5" x2="910" y2="350.5"/>
<line x1="75" y1="329.5" x2="910" y2="329.5"/>
<line x1="75" y1="309.5" x2="910" y2="309.5"/>
</g>
<line x1="75.5" y1="306" x2="75.5" y2="393.5" stroke="#d8c8d8" stroke-width="1"/>
<line x1="75" y1="393" x2="910" y2="393" stroke="#c0c0c0" stroke-width="1"/>
<g clip-path="url(#c2)" fill="none" stroke-linejoin="miter" stroke-miterlimit="2">
<polyline points="77,317.2 78,315.3 79,318.1 80,315.6 81,313.1 82,322.9 83,311.6 84,313.1 85,311.4 86,317.6 87,316.5 88,322.6 89,312 90,314.3 91,318.4 92,319.4 93,316 94,315.4 95,311.3 96,313.1 97,312.9 98,319 99,317.9 100,317.6 101,315.3 102,312.8 103,319 104,314.3 105,314.5 106,314.5 107,321.5 108,319.9 109,315.4 110,317.7 111,316.5 112,316.6 113,312.5 114,319.3 115,316.4 116,311.9 117,325.1 118,314.4 119,317.1 120,319.6 121,319.9 122,316.3 123,315.4 124,313.2 125,312.5 126,325 127,315.3 128,311.5 128.5,313.6 129,386 129.6,383 130.1,312.5 130.8,322.7 131.8,319.9 132.8,315.3 133.8,319.6 134.8,317.6 135.8,322.1 136.8,318.2 137.8,316.4 138.8,316.2 139.8,313.8 140.8,313.5 141.8,311.1 142.8,319.6 143.8,324 144.8,318.7 145.1,313.3 145.6,389 146.2,386 146.7,319.6 147.4,312.2 148.5,311.8 149,388 149.6,385 150.1,323.2 150.8,318.8 151.8,312.1 152.8,313.9 153.8,313 154.8,312.7 155.8,317.4 156.8,311.4 157.8,318.9 158.8,318.1 159.8,323.3 160.8,324.8 161.8,317.4 162.8,317.3 163.8,311.4 164.8,313.8 165.8,313.7 166.8,315.9 167.8,311.9 168.8,315.6 169.8,319.7 170.8,317.3 171.8,316 172.8,325.1 173.8,314.2 174.8,319.9 175.8,311.7 176.8,325.1 177.8,315 178.8,311.2 179.8,315 180.8,314.5 181.8,313 182.8,323.2 183.8,317.3 184.8,317.5 185.8,313.1 186.8,315.4 187.8,319.7 188.8,315.3 189.8,317.5 190.8,318 191.8,317.8 192.8,318.7 193.8,317.1 194.8,319.3 195.8,316.5 196.8,319.7 197.8,311.1 198.8,313.8 199.8,312.3 200.8,311.7 201.8,319.5 202.8,315.2 203.8,319.6 204.8,312.9 205.8,316.8 206.8,313.3 207.8,313.9 208.8,318.6 209.8,317.1 210.8,316.4 211.8,314.4 212.8,315.2 213.8,316.6 214.8,312.6 215.8,313.5 216.8,319.6 217.8,325.1 218.8,317.3 219.8,323.5 220.8,324 221.8,313.2 222.8,323.7 223.8,313.8 224.8,319.1 225.8,312.2 226.8,318.4 227.8,311.4 228.8,314.6 229.8,313 230.8,318.6 231.8,319 232.8,323.9 233.8,319.1 234.8,317.8 235.8,311.5 236.8,316.5 237.8,315.2 238.8,314 239.8,314.2 240.8,316.6 241.8,311.6 242.8,323.6 243.8,312.7 244.8,311.5 245.8,323.5 246.8,316.9 247.8,311.9 248.8,315.8 249.8,317.2 250.8,315.7 251.8,325.1 252.8,311.4 253.8,315.8 254.8,312.6 255.8,315.4 256.8,318.7 257.8,319.2 258.8,313 259.8,319.1 260.8,319.2 261.8,314.5 262.8,319.4 263.8,311.1 264.8,316.5 265.8,317.8 266.8,312.5 267.8,315.8 268.8,312.9 269.8,316 270.8,317.7 271.8,314.3 272.8,314.7 273.8,315.9 274.8,314.3 275.8,311.2 276.8,316.2 277.8,324.3 278.8,312 279.8,315.7 280.8,315.6 281.8,313.2 282.8,316.8 283.8,317.8 284.8,313.3 285.8,314.4 286.8,313.4 287.8,315.1 288.8,325.1 289.8,318.2 290.8,317.6 291.8,314.4 292.8,311 293.8,316.2 294.8,320 295.8,313 296.8,318.3 297.8,311.5 298.8,318.4 299.8,315.2 300.8,316.7 301.8,317.2 302.8,317.8 303.8,313.3 304.8,318.1 305.8,312.8 306.8,319 307.8,322.5 308.8,312.3 309.8,313.4 310.8,313.7 311.8,312.9 312.8,317.4 313.8,317.2 314.8,316.8 315.6,312.7 316.1,376 316.7,373 317.2,311.5 317.9,314.7 318.9,318.9 319.9,311.2 320.9,316.4 321.9,315.5 322.9,314.4 323.9,316.7 324.9,314.1 325.9,316.7 326.9,315.6 327.9,318.1 328.9,324.2 329.9,313 330.9,316.2 331.9,315.4 332.9,318.2 333.9,314 334.9,311.4 335.9,312.4 336.9,318.6 337.9,312 338.9,312 339.9,317.8 340.9,317.3 341.9,311.8 342.9,316.4 343.9,312.8 344.9,318.4 345.9,317 346.9,322.5 347.9,319.2 348.9,318.1 349.9,323.5 350.9,317.9 351.9,312.6 352.9,311.7 353.9,318 354.9,315.8 355.1,314.1 355.6,389.8 356.2,386.8 356.7,316.9 357.4,318.2 358.4,322.4 359.4,313.9 360.4,317.8 361.4,313.8 362.4,317 363.4,313.1 364.4,318.8 365.4,317.2 366.4,315.3 367.4,314.3 368.4,315.4 369.4,314 370.4,319.2 371.4,312.8 372.4,322.1 373.4,314 374.4,313.1 375.1,315.1 375.6,325 376.2,322 376.7,315.8 377.4,313.5 378.4,318.5 379,315.3 379.5,390 380.1,387 380.6,319 381.3,312.3 382.3,317.9 383.3,319.7 384.3,313.2 385.3,313.9 386.3,319.8 386.9,314.6 387.4,389 388,386 388.5,313.5 389.2,318.1 389.7,317.7 390.2,389.5 390.8,386.5 391.3,318.8 392,318.4 393,315.5 394,315.6 395,316.9 396,317 397,312.2 397.7,312.2 398.2,390 398.8,387 399.3,321.5 400,317.9 401,324.2 402,315.6 403,315 404,314.7 405,317.6 406,314.1 407,318.5 408,313.3 409,313.8 410,318.6 411,314.1 412,314.2 413,318.4 413.5,318.1 414,328 414.6,325 415.1,322.7 415.8,314.1 416.8,311.2 417,312.6 417.5,389.8 418.1,386.8 418.6,316 419.3,318.6 420.3,312.5 421.3,311.9 422.3,313.8 423.3,312.9 424.3,318.1 425.3,317.7 426.3,313.2 427.3,313.7 428.4,318.9 428.9,390 429.5,387 430,311.8 430.7,319.3 431.7,317.2 432.7,312.7 433.7,319.8 434.7,319.2 435.7,317.4 436.7,319.2 437.7,315.9 438.7,318.2 439.7,311.3 440.7,312.3 441.7,316.7 442.7,325.8 443.7,315 444.3,314.3 444.8,386 445.4,383 445.9,314.6 446.6,317.7 447.6,313.7 448.6,313 449.6,325.6 450.6,314.7 451.6,313.4 452.4,315.8 452.9,382.7 453.5,379.7 454,315.8 454.7,321.4 455.7,313.2 456.7,313.6 457.7,316.9 458.7,317.9 459.7,313.8 460.7,317.7 461.7,317.8 462.7,319.4 463.2,388.7 463.8,385.7 464.3,317 465,315.8 466,311.9 467,313.4 468,314.8 469,313.2 470,318.8 471,316.7 471.3,313.6 471.8,331 472.4,328 472.9,312.8 473.6,317.3 474.6,316 475.6,318 476.6,314.9 477.6,317.2 478.6,313.3 479.6,314.9 480.6,322.5 481.4,312.8 481.9,379.5 482.5,376.5 483,319.9 483.7,316.7 484.7,315.4 485.7,316.8 486.4,389.8 487.2,310.2 488.4,314 489.2,314.2 489.9,386.2 490.9,384.3 491.9,380.6 492.6,388.4 493.4,321.5 494.6,312.4 495.8,311.8 497,313.7 497.5,319.5 498.2,385.5 499,319.1 500.2,311.7 501.4,316.9 502.6,318.5 503.8,317.9 505,310.6 506.2,321.5 507.4,320.1 508.6,315.5 509.8,320.2 511,317 512.2,311.6 513.5,314.5 514.2,389.3 515,315.3 516.2,310 517.7,311.6 518.4,385.2 519.2,316.8 520.4,317.5 521.2,315.1 521.9,386.6 522.7,321.5 523.9,313.8 524.6,317.9 525.3,385.3 526.3,385.1 526.9,385.2 527.7,310.9 528.9,313.7 530.1,310.9 531.6,314.3 532.3,388.2 533.1,316.4 534.3,319.4 535.8,315.5 536.5,384.5 537.5,387.3 538.5,386.6 539.3,318.9 540.5,321.7 541.7,316.1 542.9,312.6 544.1,314 545.3,315.7 546.2,313.5 546.9,384.7 547.6,314.5 548.3,388.3 549.1,319.7 550.3,319 551.5,320.6 552.7,319.5 553.9,314.6 555.1,317.6 556.6,310.2 557.3,389.2 558.1,318.3 559.3,312.8 560.1,315.4 560.8,385.8 561.8,388 562.8,384.3 562.9,389.1 563.7,321 564.9,319.2 566.1,314.3 567.3,313.8 567.7,321.3 568.4,389.9 569.4,381.9 569.8,386.4 570.6,319.4 571.8,319 573,313 574.2,315.1 575.4,321.5 576.8,310.6 577.5,385.8 578.3,317.8 579.5,320.8 580.7,321.3 581.9,315.4 583.1,319.4 584.3,321.7 585.5,313.6 586.7,312.3 587.2,312.7 587.9,389.1 588.9,381.4 589.3,387.6 590.1,321.1 591.4,312 592.1,388.1 592.9,316.1 594.1,321.6 595.3,315.9 596.5,315.6 597.7,320.8 598.9,318.9 600.4,311.3 601.1,389.2 602.1,384 603.1,389.7 603.2,390.3 604,315.7 605.2,314.7 606.4,312.3 607.6,313 608.8,312.1 610,309.7 612.8,313.2 615.6,309 617.6,311.1 618.3,341.7 619,372.3 620.4,377.9 621.4,341.7 622.2,313.2 623.9,311.1 626,311.8 628.1,310.4 630.9,311.1 632.9,316.7 634.8,320.9 636.4,313.9 639.2,311.1 641.3,313.9 643.4,318.1 645.5,313.9 648.2,316 651.7,311.8 653.8,316.7 654.8,389 657,389.7 658,315.3 659,318.1 659.8,389 660.8,383.4 661.7,313.2 663.1,389 664.5,315.3 665.6,389 667,387.6 668.7,313.9 670.9,314.6 672.2,387.6 673.7,313.2 674.7,355.6 675.8,387.6 676.8,311.1 678.8,315.3 680.2,312.5 681.6,309.7 683,387.6 684.4,316.7 685.1,325 685.8,313.9 686.9,390.4 689,390.4 690.4,315.3 692.1,383.4 693.4,310.4 694.3,315.3 695.1,386.2 697.6,384.8 700.4,383.4 703.2,382.1 705.3,375.1 706,311.8 707.4,313.2 709,389 710.1,386.2 711.5,384.8 712.9,310.4 714,387.6 715.7,386.2 717.1,383.4 719.2,382.1 720.6,389 721.3,368.2 722.7,329.2 723.4,329.9 724.7,337.6 727.5,337.6 727.9,387.6 728.9,313.9 729.9,370.9 731.7,372.3 733.1,375.1 733.8,310.4 734.8,341.7 735.2,366.8 735.9,387.6 736.8,315.3 738,323.6 739.3,315.3 740,314 751.1,314 751.6,358 762.3,358 762.7,366.6 764.4,367 764.9,374.1 765.5,321.1 773,321.1 773,361.9 773.7,336.9 783.8,336.9 784.2,322.1 803.1,321.5 804.2,319.1 809.6,318.9 810,314.6 835.3,314.6 836.4,311.8 842.9,311.8 843.9,312.9 864.3,312.9 864.8,385.9 865.4,366.6 871.9,364.4 872.9,361.9 877.2,361.9 878.3,372 878.7,373 889,373 889.7,381.6 890.5,314 910.5,314" stroke="#ff0000" stroke-width="1.55"/>
</g>
<g stroke="#ff4040" stroke-width="1">
<line x1="69.5" y1="391.5" x2="75" y2="391.5" stroke="#ff2020"/>
<line x1="72" y1="385.5" x2="75" y2="385.5"/>
<line x1="72" y1="380.5" x2="75" y2="380.5"/>
<line x1="72" y1="375.5" x2="75" y2="375.5"/>
<line x1="69.5" y1="370.5" x2="75" y2="370.5" stroke="#ff2020"/>
<line x1="72" y1="365.5" x2="75" y2="365.5"/>
<line x1="72" y1="360.5" x2="75" y2="360.5"/>
<line x1="72" y1="355.5" x2="75" y2="355.5"/>
<line x1="69.5" y1="350.5" x2="75" y2="350.5" stroke="#ff2020"/>
<line x1="72" y1="344.5" x2="75" y2="344.5"/>
<line x1="72" y1="339.5" x2="75" y2="339.5"/>
<line x1="72" y1="334.5" x2="75" y2="334.5"/>
<line x1="69.5" y1="329.5" x2="75" y2="329.5" stroke="#ff2020"/>
<line x1="72" y1="324.5" x2="75" y2="324.5"/>
<line x1="72" y1="319.5" x2="75" y2="319.5"/>
<line x1="72" y1="314.5" x2="75" y2="314.5"/>
<line x1="69.5" y1="309.5" x2="75" y2="309.5" stroke="#ff2020"/>
</g>
<text x="64.8" y="393" fill="#ff0000" font-size="8.5" text-anchor="end" letter-spacing="-0.7">0</text>
<text x="64.8" y="372.5" fill="#ff0000" font-size="8.5" text-anchor="end" letter-spacing="-0.7">90</text>
<text x="64.8" y="352" fill="#ff0000" font-size="8.5" text-anchor="end" letter-spacing="-0.7">180</text>
<text x="64.8" y="331.5" fill="#ff0000" font-size="8.5" text-anchor="end" letter-spacing="-0.7">270</text>
<text x="64.8" y="311" fill="#ff0000" font-size="8.5" text-anchor="end" letter-spacing="-0.7">360</text>
<rect x="45" y="300" width="22" height="6" fill="#fff"/>
<text x="944.5" y="311" fill="#ff0000" font-size="14" text-anchor="middle">N</text>
<text x="944.5" y="332" fill="#ff0000" font-size="14" text-anchor="middle">W</text>
<text x="944.5" y="353.8" fill="#ff0000" font-size="14" text-anchor="middle">S</text>
<text x="944.5" y="374" fill="#ff0000" font-size="14" text-anchor="middle">O</text>
<text x="944.5" y="394" fill="#ff0000" font-size="14" text-anchor="middle">N</text>
<text x="1.5" y="414" fill="#ff0000" font-size="14" text-anchor="start" textLength="39" lengthAdjust="spacingAndGlyphs">Regen</text>
<text x="142.7" y="414" fill="#0000ff" font-size="14" text-anchor="start" textLength="61.2" lengthAdjust="spacingAndGlyphs">Luftfeuchte</text>
<text x="673.2" y="414" fill="#008000" font-size="14" text-anchor="start" textLength="69.8" lengthAdjust="spacingAndGlyphs">Temperatur</text>
<text x="850.5" y="414" fill="#ff00ff" font-size="14" text-anchor="start" textLength="55.8" lengthAdjust="spacingAndGlyphs">Taupunkt</text>
<rect x="78.5" y="426.5" width="827.0" height="242.0" fill="url(#g1)"/>
<g stroke="#e0e0e0" stroke-width="1" stroke-dasharray="1 1" opacity="0.26">
<line x1="78.5" y1="430.5" x2="905.5" y2="430.5"/>
<line x1="78.5" y1="441.5" x2="905.5" y2="441.5"/>
<line x1="78.5" y1="453.5" x2="905.5" y2="453.5"/>
<line x1="78.5" y1="465.5" x2="905.5" y2="465.5"/>
<line x1="78.5" y1="477.5" x2="905.5" y2="477.5"/>
<line x1="78.5" y1="489.5" x2="905.5" y2="489.5"/>
<line x1="78.5" y1="501.5" x2="905.5" y2="501.5"/>
<line x1="78.5" y1="513.5" x2="905.5" y2="513.5"/>
<line x1="78.5" y1="524.5" x2="905.5" y2="524.5"/>
<line x1="78.5" y1="536.5" x2="905.5" y2="536.5"/>
<line x1="78.5" y1="548.5" x2="905.5" y2="548.5"/>
<line x1="78.5" y1="560.5" x2="905.5" y2="560.5"/>
<line x1="78.5" y1="572.5" x2="905.5" y2="572.5"/>
<line x1="78.5" y1="584.5" x2="905.5" y2="584.5"/>
<line x1="78.5" y1="596.5" x2="905.5" y2="596.5"/>
<line x1="78.5" y1="608.5" x2="905.5" y2="608.5"/>
<line x1="78.5" y1="620.5" x2="905.5" y2="620.5"/>
<line x1="78.5" y1="631.5" x2="905.5" y2="631.5"/>
<line x1="78.5" y1="643.5" x2="905.5" y2="643.5"/>
<line x1="78.5" y1="655.5" x2="905.5" y2="655.5"/>
<line x1="78.5" y1="667.5" x2="905.5" y2="667.5"/>
<line x1="147.5" y1="426.5" x2="147.5" y2="668.5"/>
<line x1="215.5" y1="426.5" x2="215.5" y2="668.5"/>
<line x1="284.5" y1="426.5" x2="284.5" y2="668.5"/>
<line x1="352.5" y1="426.5" x2="352.5" y2="668.5"/>
<line x1="420.5" y1="426.5" x2="420.5" y2="668.5"/>
<line x1="489.5" y1="426.5" x2="489.5" y2="668.5"/>
<line x1="557.5" y1="426.5" x2="557.5" y2="668.5"/>
<line x1="626.5" y1="426.5" x2="626.5" y2="668.5"/>
<line x1="694.5" y1="426.5" x2="694.5" y2="668.5"/>
<line x1="762.5" y1="426.5" x2="762.5" y2="668.5"/>
<line x1="831.5" y1="426.5" x2="831.5" y2="668.5"/>
<line x1="899.5" y1="426.5" x2="899.5" y2="668.5"/>
</g>
<line x1="79" y1="426.5" x2="79" y2="668.5" stroke="#d8c8d8" stroke-width="1"/>
<line x1="78.5" y1="668.5" x2="905.5" y2="668.5" stroke="#c0c0c0" stroke-width="1"/>
<g clip-path="url(#c3)" fill="none" stroke-linejoin="round">
<polyline points="80,438 268.5,438 269,440.5 279.5,440.5 280,438 283,438 283.5,440.5 284.5,438 287.5,438 288,440.5 289,438 322,438 322.4,440.5 323,438 541.5,438 542,440.5 543,438.5 544,441 568,441 574,443.5 579,446 584,448.5 596,448.8 600,449.5 604,452 607,456 610,457.5 613,456 616,459 619,457 622,458.5 626,457.5 629,460 632,458.5 636,461 640,460.5 645,461.5 650,461 654,463.5 660,463.5 664,461.5 668,463.5 673,465 677,463.5 681,461.5 686,463.5 692,463.3 695,461.5 698,465 701,466.2 705,465 709,463 712,462.5 716,465 720,466 724,467 728,464 732,462 735,464 738,466.5 742,467.5 748,466.5 752,467.5 758,466.5 762,467.5 768,466.5 772,464.5 776,463.7 786,463.7 787,461.5 788,463.7 806,463.7 810,465.5 816,466.5 820,467.5 823,469 826,468 829,471 834,472.5 837,474 840,476 843,475 846,478 850,479 853,483 856,481.5 859,485 862,485.2 866,483 869,483.5 872,482 876,483.2 880,482 884,479.5 888,477.5 892,475 895,472.5 898,471.5 901,472 903,472.5" stroke="#0000ff" stroke-width="1.7"/>
<polyline points="80,620 83,620.5 86,620.6 89,621.9 92,622.4 95,622.5 98,622.2 101,622.4 104,622.4 107,623.2 110,623 113.3,622.7 116.7,623.1 120,623.1 123.3,623.1 126.7,623.2 130,622.9 133,623.3 136,623.3 139,623 142,623.5 145,623.5 148,623.6 151,623.6 154,623.7 157,623.7 160,623.8 163,623.5 166,623.9 169,624.3 172,624 175,624 178.3,624 181.7,624.4 185,624 188.3,623.6 191.7,624 195,623.6 198.3,624.3 201.7,624.7 205,625 209,626.1 213,626.9 216.5,627.2 220,628.4 223,628.8 226,628.8 229.5,628.9 233,629 236.5,629.2 240,628.9 243,629.1 246,629.2 249,630.1 252,629.9 255,630.4 258.4,630.2 261.8,630.3 265.2,630.5 268.6,630.3 272,631.1 275.1,630.8 278.2,631.1 281.3,630.8 284.4,630.8 287.6,630.8 290.7,631.1 293.8,630.8 296.9,630.8 300,630.8 303,630.4 306,630.4 309,630.7 312,630.7 315,630.6 318,630.3 321,630.6 324,630.6 327,630.5 330,630.9 333,630.1 336,630.1 339,630.5 342,630.1 345,630.5 348,630.4 351,630.1 354,630.4 357,630.4 360,630.4 363.1,630.4 366.2,630.6 369.4,629.9 372.5,630.2 375.6,630.1 378.8,630.5 381.9,630 385,630 388,629.8 391,630 394,629.4 397,629.2 400,628.6 403,628.8 406,628.1 409,628.6 412,628 415.2,628 418.5,628 421.8,627.9 425,627.5 428,628.2 431,627.7 434,628 437,627.6 440,627.1 443,627 446,626.9 449,626.9 452,627.1 455,627 458,626.4 461,626.9 464,626.3 467,626 470,625.4 473.2,625.2 476.4,625.3 479.6,625.4 482.8,624.8 486,624.9 489.5,624.5 493,624.5 496.5,624.8 500,624.8 503.3,624.6 506.7,623.8 510,624 513.3,624.1 516.7,624 520,623.5 523.3,623.7 526.6,623.2 529.9,623.4 533.1,622.9 536.4,622.4 539.7,622.2 543,622.4 546,622.3 549,622.2 552,622.1 555,622 558.2,622.2 561.5,621.8 564.8,621.6 568,621.5 573,619.1 576,618.5 579,617 582.7,617.6 586.3,616.8 590,617.4 593.3,617.1 596.7,616.1 600,616.6 603,616.1 606,616 609,616 612,615.9 615,616.1 618,615.7 621.5,616.3 625,616.1 628.5,616.3 632,616.5 635.2,617 638.4,617.2 641.6,616.7 644.8,617.2 648,617.4 651,617.4 654,618.6 657,618.6 660,619 663.4,618.9 666.8,619.5 670.2,620.1 673.6,620.4 677,620.6 680.3,620.7 683.6,620.3 686.9,620 690.1,620.4 693.4,620.4 696.7,620 700,620.4 703.2,620 706.4,620.7 709.6,620.7 712.8,620.4 716,620 719.2,620.3 722.4,620.3 725.6,620.3 728.8,620.7 732,620.6 735.2,619.7 738.5,619.4 741.8,619.1 745,618.9 749,619.3 753,618.7 756.2,618.7 759.4,618.4 762.7,618.7 765.9,618.4 769.1,618.4 772.3,618.7 775.6,618.7 778.8,618.4 782,618.4 785.2,619.3 788.5,619.5 791.8,619.3 795,619.5 798.3,619.9 801.7,619.5 805,619.9 808.3,619.9 811.7,619.1 815,619.1 818.3,618.6 821.7,618.5 825,618.4 828,618 831,617.6 834,616.6 837,616.6 840.7,615.9 844.3,615.6 848,614.9 851.3,613.7 854.7,613.6 858,613.2 861.1,613.2 864.3,613.1 867.4,613.1 870.6,613.1 873.7,613.4 876.9,613 880,613 883.3,612.7 886.7,613.1 890,612.8 893.3,613.1 896.7,612.8 900,612.9 903,613.5" stroke="#008000" stroke-width="2"/>
<polyline points="80,624.3 85,625.5 88.5,625.1 92,626.2 96,627 100,626.8 103,626.8 106,626.7 109,626.6 112,626.1 115.2,626.3 118.5,627 121.8,627.8 125,627.5 128,628.2 131,628.3 134,628.5 137,628.1 140,628.3 143.5,628.4 147,628.5 150.5,628.6 154,629.2 157.2,628.2 160.5,628.7 163.8,628.7 167,628.8 170.2,628.8 173.5,628.8 176.8,628.8 180,628.3 183,628.3 186,629.3 189,628.8 192,628.8 195,628.7 198,628.7 201,628.7 204,628.7 208,629.1 212,630 215.5,630.9 219,632.3 222.5,632.3 226,633.4 229.2,633.5 232.3,634.1 235.5,633.2 238.7,633.3 241.8,633.9 245,634.5 248.2,634.3 251.5,634.6 254.8,635.5 258,635.3 261.3,636.1 264.7,636 268,636.3 272,636.5 276,636.7 279.5,636.5 283,636.7 288,637.3 291.5,636.8 295,635.8 298.3,635.5 301.7,635.8 305,635.5 308.4,634.3 311.8,634.7 315.2,634.5 318.6,634.9 322,634.2 325.3,634.7 328.6,634.7 331.9,633.7 335.1,634.3 338.4,633.8 341.7,634.8 345,634.3 348.1,634.2 351.2,633.7 354.4,634.1 357.5,634.5 360.6,634 363.8,634.4 366.9,633.4 370,633.8 373.3,633.8 376.7,633.2 380,633.6 383.3,633.6 386.7,633 390,633.5 393.2,634 396.4,633.5 399.6,632.9 402.8,633.4 406,633.4 409,632.6 412,632.8 415,632 418,632.5 421,632 424,632 427,632.5 430,632 433,632.3 436,632.1 439,631.9 442,632.2 445,631.5 448,630.8 451,631.4 454,631 457,631.7 460,632.3 463,631.5 466,631.1 469,630.8 472,631 475,629.8 478,630.6 481,629.9 484,629.6 487,629.4 490,629.7 493,629.2 496,629.6 499,629.1 502,629 505,629.5 508,628.3 511,629.1 514,627.9 517,628.2 520,627.5 523,627.8 526,627.6 529,626.9 532,627.2 535,626.5 538,626.6 541,627.1 544,627.2 547,626.7 550,627.8 553.5,627.2 557,627.6 560.5,627.6 564,627 567,626.5 570,626 575,623.7 580,623.8 583,623.9 586,624.5 589,625.3 592,624.5 595,625.3 598.7,625.2 602.3,625.1 606,625.5 609,625.6 612,625.8 616,626.2 620,626.2 623.5,626.1 627,626.5 630.7,627.3 634.3,628 638,627.8 641.3,627.6 644.7,628.4 648,628.2 652,630.1 656,630.5 659,630.5 662,631.6 665,631.6 668.2,632.3 671.5,632.5 674.8,632.8 678,632.5 681,632.8 684,633.1 687,633.9 690,634.2 693.3,633.5 696.7,633.4 700,633.2 703,634.4 706,634.1 709,634.3 712,634.5 715,634.4 718,634.2 721,634.1 724,634.5 727.7,634.1 731.3,632.7 735,632.8 738.3,633.1 741.7,633 745,631.8 748,632.3 751,632.4 754,632.4 757,633 760,632.5 763.3,632.4 766.7,632.3 770,631.8 773.3,632.7 776.7,632.6 780,632 783.3,632.1 786.7,632.6 790,632.7 793.3,632.3 796.7,632.3 800,632.4 803.3,632.3 806.7,631.8 810,631.7 813.3,632.6 816.7,632.1 820,632 823.3,632.1 826.7,632.3 830,631.9 833.3,632.5 836.7,632.2 840,632.8 843,632.9 846,633 849,633.6 852,632.7 855,633.3 858,632.9 861,633.7 864,633 867,632.7 870,632 873.3,631.8 876.7,630.7 880,630 884,629.9 888,629.2 891,629 894,628.2 897,628.4 900,627.5 903,629" stroke="#ff00ff" stroke-width="2"/>
<polyline points="79,665.9 498.5,665.9 499,664 549,664 549.5,662.6 579,662.6 580,660.4 595,660.2 600,659.2 610,658.8 612,657.8 624,657.6 625.5,656.7 898.5,656.7 900,662 901,665.9 905,665.9" stroke="#ff0000" stroke-width="2.6" stroke-linejoin="miter"/>
</g>
<line x1="340" y1="645" x2="340" y2="670" stroke="#ffff00" stroke-width="2" stroke-dasharray="1 1.1"/>
<line x1="755.5" y1="645" x2="755.5" y2="670" stroke="#ffff00" stroke-width="2" stroke-dasharray="1 1.1"/>
<text x="338.6" y="644" fill="#d8d028" font-size="10" text-anchor="middle" textLength="37" lengthAdjust="spacingAndGlyphs">Sun Rise</text>
<rect x="33" y="426.5" width="2" height="242" fill="#0000ff"/>
<g stroke="#0000ff" stroke-width="1">
<line x1="28.5" y1="666.5" x2="33" y2="666.5"/>
<line x1="30.8" y1="664" x2="33" y2="664" opacity="0.7"/>
<line x1="30.8" y1="661.6" x2="33" y2="661.6" opacity="0.7"/>
<line x1="30.8" y1="659.3" x2="33" y2="659.3" opacity="0.7"/>
<line x1="30.8" y1="656.9" x2="33" y2="656.9" opacity="0.7"/>
<line x1="28.5" y1="654.5" x2="33" y2="654.5"/>
<line x1="30.8" y1="652.1" x2="33" y2="652.1" opacity="0.7"/>
<line x1="30.8" y1="649.8" x2="33" y2="649.8" opacity="0.7"/>
<line x1="30.8" y1="647.4" x2="33" y2="647.4" opacity="0.7"/>
<line x1="30.8" y1="645" x2="33" y2="645" opacity="0.7"/>
<line x1="28.5" y1="642.5" x2="33" y2="642.5"/>
<line x1="30.8" y1="640.3" x2="33" y2="640.3" opacity="0.7"/>
<line x1="30.8" y1="637.9" x2="33" y2="637.9" opacity="0.7"/>
<line x1="30.8" y1="635.5" x2="33" y2="635.5" opacity="0.7"/>
<line x1="30.8" y1="633.1" x2="33" y2="633.1" opacity="0.7"/>
<line x1="28.5" y1="630.5" x2="33" y2="630.5"/>
<line x1="30.8" y1="628.4" x2="33" y2="628.4" opacity="0.7"/>
<line x1="30.8" y1="626" x2="33" y2="626" opacity="0.7"/>
<line x1="30.8" y1="623.6" x2="33" y2="623.6" opacity="0.7"/>
<line x1="30.8" y1="621.3" x2="33" y2="621.3" opacity="0.7"/>
<line x1="28.5" y1="618.5" x2="33" y2="618.5"/>
<line x1="30.8" y1="616.5" x2="33" y2="616.5" opacity="0.7"/>
<line x1="30.8" y1="614.1" x2="33" y2="614.1" opacity="0.7"/>
<line x1="30.8" y1="611.8" x2="33" y2="611.8" opacity="0.7"/>
<line x1="30.8" y1="609.4" x2="33" y2="609.4" opacity="0.7"/>
<line x1="28.5" y1="607.5" x2="33" y2="607.5"/>
<line x1="30.8" y1="604.6" x2="33" y2="604.6" opacity="0.7"/>
<line x1="30.8" y1="602.3" x2="33" y2="602.3" opacity="0.7"/>
<line x1="30.8" y1="599.9" x2="33" y2="599.9" opacity="0.7"/>
<line x1="30.8" y1="597.5" x2="33" y2="597.5" opacity="0.7"/>
<line x1="28.5" y1="595.5" x2="33" y2="595.5"/>
<line x1="30.8" y1="592.8" x2="33" y2="592.8" opacity="0.7"/>
<line x1="30.8" y1="590.4" x2="33" y2="590.4" opacity="0.7"/>
<line x1="30.8" y1="588" x2="33" y2="588" opacity="0.7"/>
<line x1="30.8" y1="585.6" x2="33" y2="585.6" opacity="0.7"/>
<line x1="28.5" y1="583.5" x2="33" y2="583.5"/>
<line x1="30.8" y1="580.9" x2="33" y2="580.9" opacity="0.7"/>
<line x1="30.8" y1="578.5" x2="33" y2="578.5" opacity="0.7"/>
<line x1="30.8" y1="576.1" x2="33" y2="576.1" opacity="0.7"/>
<line x1="30.8" y1="573.8" x2="33" y2="573.8" opacity="0.7"/>
<line x1="28.5" y1="571.5" x2="33" y2="571.5"/>
<line x1="30.8" y1="569" x2="33" y2="569" opacity="0.7"/>
<line x1="30.8" y1="566.6" x2="33" y2="566.6" opacity="0.7"/>
<line x1="30.8" y1="564.3" x2="33" y2="564.3" opacity="0.7"/>
<line x1="30.8" y1="561.9" x2="33" y2="561.9" opacity="0.7"/>
<line x1="28.5" y1="559.5" x2="33" y2="559.5"/>
<line x1="30.8" y1="557.1" x2="33" y2="557.1" opacity="0.7"/>
<line x1="30.8" y1="554.8" x2="33" y2="554.8" opacity="0.7"/>
<line x1="30.8" y1="552.4" x2="33" y2="552.4" opacity="0.7"/>
<line x1="30.8" y1="550" x2="33" y2="550" opacity="0.7"/>
<line x1="28.5" y1="547.5" x2="33" y2="547.5"/>
<line x1="30.8" y1="545.3" x2="33" y2="545.3" opacity="0.7"/>
<line x1="30.8" y1="542.9" x2="33" y2="542.9" opacity="0.7"/>
<line x1="30.8" y1="540.5" x2="33" y2="540.5" opacity="0.7"/>
<line x1="30.8" y1="538.1" x2="33" y2="538.1" opacity="0.7"/>
<line x1="28.5" y1="535.5" x2="33" y2="535.5"/>
<line x1="30.8" y1="533.4" x2="33" y2="533.4" opacity="0.7"/>
<line x1="30.8" y1="531" x2="33" y2="531" opacity="0.7"/>
<line x1="30.8" y1="528.6" x2="33" y2="528.6" opacity="0.7"/>
<line x1="30.8" y1="526.3" x2="33" y2="526.3" opacity="0.7"/>
<line x1="28.5" y1="523.5" x2="33" y2="523.5"/>
<line x1="30.8" y1="521.5" x2="33" y2="521.5" opacity="0.7"/>
<line x1="30.8" y1="519.1" x2="33" y2="519.1" opacity="0.7"/>
<line x1="30.8" y1="516.8" x2="33" y2="516.8" opacity="0.7"/>
<line x1="30.8" y1="514.4" x2="33" y2="514.4" opacity="0.7"/>
<line x1="28.5" y1="512.5" x2="33" y2="512.5"/>
<line x1="30.8" y1="509.6" x2="33" y2="509.6" opacity="0.7"/>
<line x1="30.8" y1="507.3" x2="33" y2="507.3" opacity="0.7"/>
<line x1="30.8" y1="504.9" x2="33" y2="504.9" opacity="0.7"/>
<line x1="30.8" y1="502.5" x2="33" y2="502.5" opacity="0.7"/>
<line x1="28.5" y1="500.5" x2="33" y2="500.5"/>
<line x1="30.8" y1="497.8" x2="33" y2="497.8" opacity="0.7"/>
<line x1="30.8" y1="495.4" x2="33" y2="495.4" opacity="0.7"/>
<line x1="30.8" y1="493" x2="33" y2="493" opacity="0.7"/>
<line x1="30.8" y1="490.6" x2="33" y2="490.6" opacity="0.7"/>
<line x1="28.5" y1="488.5" x2="33" y2="488.5"/>
<line x1="30.8" y1="485.9" x2="33" y2="485.9" opacity="0.7"/>
<line x1="30.8" y1="483.5" x2="33" y2="483.5" opacity="0.7"/>
<line x1="30.8" y1="481.1" x2="33" y2="481.1" opacity="0.7"/>
<line x1="30.8" y1="478.8" x2="33" y2="478.8" opacity="0.7"/>
<line x1="28.5" y1="476.5" x2="33" y2="476.5"/>
<line x1="30.8" y1="474" x2="33" y2="474" opacity="0.7"/>
<line x1="30.8" y1="471.6" x2="33" y2="471.6" opacity="0.7"/>
<line x1="30.8" y1="469.3" x2="33" y2="469.3" opacity="0.7"/>
<line x1="30.8" y1="466.9" x2="33" y2="466.9" opacity="0.7"/>
<line x1="28.5" y1="464.5" x2="33" y2="464.5"/>
<line x1="30.8" y1="462.1" x2="33" y2="462.1" opacity="0.7"/>
<line x1="30.8" y1="459.8" x2="33" y2="459.8" opacity="0.7"/>
<line x1="30.8" y1="457.4" x2="33" y2="457.4" opacity="0.7"/>
<line x1="30.8" y1="455" x2="33" y2="455" opacity="0.7"/>
<line x1="28.5" y1="452.5" x2="33" y2="452.5"/>
<line x1="30.8" y1="450.3" x2="33" y2="450.3" opacity="0.7"/>
<line x1="30.8" y1="447.9" x2="33" y2="447.9" opacity="0.7"/>
<line x1="30.8" y1="445.5" x2="33" y2="445.5" opacity="0.7"/>
<line x1="30.8" y1="443.1" x2="33" y2="443.1" opacity="0.7"/>
<line x1="28.5" y1="440.5" x2="33" y2="440.5"/>
<line x1="30.8" y1="438.4" x2="33" y2="438.4" opacity="0.7"/>
<line x1="30.8" y1="436" x2="33" y2="436" opacity="0.7"/>
<line x1="30.8" y1="433.6" x2="33" y2="433.6" opacity="0.7"/>
<line x1="30.8" y1="431.3" x2="33" y2="431.3" opacity="0.7"/>
<line x1="28.5" y1="428.5" x2="33" y2="428.5"/>
</g>
<text x="25.8" y="668.8" fill="#0000ff" font-size="8.5" text-anchor="end" letter-spacing="-0.7">0</text>
<text x="25.8" y="656.9" fill="#0000ff" font-size="8.5" text-anchor="end" letter-spacing="-0.7">5</text>
<text x="25.8" y="645.1" fill="#0000ff" font-size="8.5" text-anchor="end" letter-spacing="-0.7">10</text>
<text x="25.8" y="633.2" fill="#0000ff" font-size="8.5" text-anchor="end" letter-spacing="-0.7">15</text>
<text x="25.8" y="621.3" fill="#0000ff" font-size="8.5" text-anchor="end" letter-spacing="-0.7">20</text>
<text x="25.8" y="609.4" fill="#0000ff" font-size="8.5" text-anchor="end" letter-spacing="-0.7">25</text>
<text x="25.8" y="597.6" fill="#0000ff" font-size="8.5" text-anchor="end" letter-spacing="-0.7">30</text>
<text x="25.8" y="585.7" fill="#0000ff" font-size="8.5" text-anchor="end" letter-spacing="-0.7">35</text>
<text x="25.8" y="573.8" fill="#0000ff" font-size="8.5" text-anchor="end" letter-spacing="-0.7">40</text>
<text x="25.8" y="561.9" fill="#0000ff" font-size="8.5" text-anchor="end" letter-spacing="-0.7">45</text>
<text x="25.8" y="550.1" fill="#0000ff" font-size="8.5" text-anchor="end" letter-spacing="-0.7">50</text>
<text x="25.8" y="538.2" fill="#0000ff" font-size="8.5" text-anchor="end" letter-spacing="-0.7">55</text>
<text x="25.8" y="526.3" fill="#0000ff" font-size="8.5" text-anchor="end" letter-spacing="-0.7">60</text>
<text x="25.8" y="514.4" fill="#0000ff" font-size="8.5" text-anchor="end" letter-spacing="-0.7">65</text>
<text x="25.8" y="502.5" fill="#0000ff" font-size="8.5" text-anchor="end" letter-spacing="-0.7">70</text>
<text x="25.8" y="490.7" fill="#0000ff" font-size="8.5" text-anchor="end" letter-spacing="-0.7">75</text>
<text x="25.8" y="478.8" fill="#0000ff" font-size="8.5" text-anchor="end" letter-spacing="-0.7">80</text>
<text x="25.8" y="466.9" fill="#0000ff" font-size="8.5" text-anchor="end" letter-spacing="-0.7">85</text>
<text x="25.8" y="455" fill="#0000ff" font-size="8.5" text-anchor="end" letter-spacing="-0.7">90</text>
<text x="25.8" y="443.2" fill="#0000ff" font-size="8.5" text-anchor="end" letter-spacing="-0.7">95</text>
<text x="25.8" y="431.3" fill="#0000ff" font-size="8.5" text-anchor="end" letter-spacing="-0.7">100</text>
<rect x="8" y="420" width="20" height="6.5" fill="#fff"/>
<g stroke="#ff4040" stroke-width="1">
<line x1="73.5" y1="666.5" x2="79" y2="666.5" stroke="#ff2020"/>
<line x1="76" y1="656.5" x2="79" y2="656.5"/>
<line x1="76" y1="646.5" x2="79" y2="646.5"/>
<line x1="76" y1="636.5" x2="79" y2="636.5"/>
<line x1="73.5" y1="626.5" x2="79" y2="626.5" stroke="#ff2020"/>
<line x1="76" y1="617.5" x2="79" y2="617.5"/>
<line x1="76" y1="607.5" x2="79" y2="607.5"/>
<line x1="76" y1="597.5" x2="79" y2="597.5"/>
<line x1="73.5" y1="587.5" x2="79" y2="587.5" stroke="#ff2020"/>
<line x1="76" y1="577.5" x2="79" y2="577.5"/>
<line x1="76" y1="567.5" x2="79" y2="567.5"/>
<line x1="76" y1="557.5" x2="79" y2="557.5"/>
<line x1="73.5" y1="547.5" x2="79" y2="547.5" stroke="#ff2020"/>
<line x1="76" y1="538.5" x2="79" y2="538.5"/>
<line x1="76" y1="528.5" x2="79" y2="528.5"/>
<line x1="76" y1="518.5" x2="79" y2="518.5"/>
<line x1="73.5" y1="508.5" x2="79" y2="508.5" stroke="#ff2020"/>
<line x1="76" y1="498.5" x2="79" y2="498.5"/>
<line x1="76" y1="488.5" x2="79" y2="488.5"/>
<line x1="76" y1="478.5" x2="79" y2="478.5"/>
<line x1="73.5" y1="468.5" x2="79" y2="468.5" stroke="#ff2020"/>
<line x1="76" y1="459.5" x2="79" y2="459.5"/>
<line x1="76" y1="449.5" x2="79" y2="449.5"/>
<line x1="76" y1="439.5" x2="79" y2="439.5"/>
<line x1="73.5" y1="429.5" x2="79" y2="429.5" stroke="#ff2020"/>
</g>
<text x="69.3" y="668.3" fill="#ff0000" font-size="8.5" text-anchor="end" letter-spacing="-0.7">0</text>
<text x="69.3" y="628.8" fill="#ff0000" font-size="8.5" text-anchor="end" letter-spacing="-0.7">5</text>
<text x="69.3" y="589.3" fill="#ff0000" font-size="8.5" text-anchor="end" letter-spacing="-0.7">10</text>
<text x="69.3" y="549.8" fill="#ff0000" font-size="8.5" text-anchor="end" letter-spacing="-0.7">15</text>
<text x="69.3" y="510.3" fill="#ff0000" font-size="8.5" text-anchor="end" letter-spacing="-0.7">20</text>
<text x="69.3" y="470.8" fill="#ff0000" font-size="8.5" text-anchor="end" letter-spacing="-0.7">25</text>
<text x="69.3" y="431.3" fill="#ff0000" font-size="8.5" text-anchor="end" letter-spacing="-0.7">30</text>
<rect x="55" y="420" width="17" height="6.5" fill="#fff"/>
<g stroke="#30a030" stroke-width="1">
<line x1="905.5" y1="666.5" x2="910.5" y2="666.5" stroke="#109010"/>
<line x1="905.5" y1="660.5" x2="908" y2="660.5"/>
<line x1="905.5" y1="654.5" x2="908" y2="654.5"/>
<line x1="905.5" y1="648.5" x2="908" y2="648.5"/>
<line x1="905.5" y1="642.5" x2="910.5" y2="642.5" stroke="#109010"/>
<line x1="905.5" y1="636.5" x2="908" y2="636.5"/>
<line x1="905.5" y1="630.5" x2="908" y2="630.5"/>
<line x1="905.5" y1="624.5" x2="908" y2="624.5"/>
<line x1="905.5" y1="618.5" x2="910.5" y2="618.5" stroke="#109010"/>
<line x1="905.5" y1="612.5" x2="908" y2="612.5"/>
<line x1="905.5" y1="606.5" x2="908" y2="606.5"/>
<line x1="905.5" y1="601.5" x2="908" y2="601.5"/>
<line x1="905.5" y1="595.5" x2="910.5" y2="595.5" stroke="#109010"/>
<line x1="905.5" y1="589.5" x2="908" y2="589.5"/>
<line x1="905.5" y1="583.5" x2="908" y2="583.5"/>
<line x1="905.5" y1="577.5" x2="908" y2="577.5"/>
<line x1="905.5" y1="571.5" x2="910.5" y2="571.5" stroke="#109010"/>
<line x1="905.5" y1="565.5" x2="908" y2="565.5"/>
<line x1="905.5" y1="559.5" x2="908" y2="559.5"/>
<line x1="905.5" y1="553.5" x2="908" y2="553.5"/>
<line x1="905.5" y1="547.5" x2="910.5" y2="547.5" stroke="#109010"/>
<line x1="905.5" y1="541.5" x2="908" y2="541.5"/>
<line x1="905.5" y1="535.5" x2="908" y2="535.5"/>
<line x1="905.5" y1="529.5" x2="908" y2="529.5"/>
<line x1="905.5" y1="524.5" x2="910.5" y2="524.5" stroke="#109010"/>
<line x1="905.5" y1="518.5" x2="908" y2="518.5"/>
<line x1="905.5" y1="512.5" x2="908" y2="512.5"/>
<line x1="905.5" y1="506.5" x2="908" y2="506.5"/>
<line x1="905.5" y1="500.5" x2="910.5" y2="500.5" stroke="#109010"/>
<line x1="905.5" y1="494.5" x2="908" y2="494.5"/>
<line x1="905.5" y1="488.5" x2="908" y2="488.5"/>
<line x1="905.5" y1="482.5" x2="908" y2="482.5"/>
<line x1="905.5" y1="476.5" x2="910.5" y2="476.5" stroke="#109010"/>
<line x1="905.5" y1="470.5" x2="908" y2="470.5"/>
<line x1="905.5" y1="464.5" x2="908" y2="464.5"/>
<line x1="905.5" y1="458.5" x2="908" y2="458.5"/>
<line x1="905.5" y1="452.5" x2="910.5" y2="452.5" stroke="#109010"/>
<line x1="905.5" y1="447.5" x2="908" y2="447.5"/>
<line x1="905.5" y1="441.5" x2="908" y2="441.5"/>
<line x1="905.5" y1="435.5" x2="908" y2="435.5"/>
<line x1="905.5" y1="429.5" x2="910.5" y2="429.5" stroke="#109010"/>
</g>
<text x="913" y="668.1" fill="#008000" font-size="8.5" text-anchor="start" letter-spacing="-0.7">-10</text>
<text x="913" y="644.4" fill="#008000" font-size="8.5" text-anchor="start" letter-spacing="-0.7">-5</text>
<text x="913" y="620.7" fill="#008000" font-size="8.5" text-anchor="start" letter-spacing="-0.7">0</text>
<text x="913" y="597" fill="#008000" font-size="8.5" text-anchor="start" letter-spacing="-0.7">5</text>
<text x="913" y="573.3" fill="#008000" font-size="8.5" text-anchor="start" letter-spacing="-0.7">10</text>
<text x="913" y="549.7" fill="#008000" font-size="8.5" text-anchor="start" letter-spacing="-0.7">15</text>
<text x="913" y="526" fill="#008000" font-size="8.5" text-anchor="start" letter-spacing="-0.7">20</text>
<text x="913" y="502.3" fill="#008000" font-size="8.5" text-anchor="start" letter-spacing="-0.7">25</text>
<text x="913" y="478.6" fill="#008000" font-size="8.5" text-anchor="start" letter-spacing="-0.7">30</text>
<text x="913" y="454.9" fill="#008000" font-size="8.5" text-anchor="start" letter-spacing="-0.7">35</text>
<text x="913" y="431.2" fill="#008000" font-size="8.5" text-anchor="start" letter-spacing="-0.7">40</text>
<rect x="911" y="420" width="16" height="6.5" fill="#fff"/>
<g stroke="#b8b8b8" stroke-width="1.4">
<line x1="95.4" y1="669" x2="95.4" y2="672.5" stroke-width="1"/>
<line x1="112.5" y1="669" x2="112.5" y2="672.5" stroke-width="1"/>
<line x1="129.6" y1="669" x2="129.6" y2="672.5" stroke-width="1"/>
<line x1="146.7" y1="669" x2="146.7" y2="674.5"/>
<line x1="163.8" y1="669" x2="163.8" y2="672.5" stroke-width="1"/>
<line x1="180.9" y1="669" x2="180.9" y2="672.5" stroke-width="1"/>
<line x1="198" y1="669" x2="198" y2="672.5" stroke-width="1"/>
<line x1="215.1" y1="669" x2="215.1" y2="674.5"/>
<line x1="232.2" y1="669" x2="232.2" y2="672.5" stroke-width="1"/>
<line x1="249.3" y1="669" x2="249.3" y2="672.5" stroke-width="1"/>
<line x1="266.4" y1="669" x2="266.4" y2="672.5" stroke-width="1"/>
<line x1="283.5" y1="669" x2="283.5" y2="674.5"/>
<line x1="300.6" y1="669" x2="300.6" y2="672.5" stroke-width="1"/>
<line x1="317.7" y1="669" x2="317.7" y2="672.5" stroke-width="1"/>
<line x1="334.8" y1="669" x2="334.8" y2="672.5" stroke-width="1"/>
<line x1="351.9" y1="669" x2="351.9" y2="674.5"/>
<line x1="369" y1="669" x2="369" y2="672.5" stroke-width="1"/>
<line x1="386.1" y1="669" x2="386.1" y2="672.5" stroke-width="1"/>
<line x1="403.2" y1="669" x2="403.2" y2="672.5" stroke-width="1"/>
<line x1="420.3" y1="669" x2="420.3" y2="674.5"/>
<line x1="437.4" y1="669" x2="437.4" y2="672.5" stroke-width="1"/>
<line x1="454.5" y1="669" x2="454.5" y2="672.5" stroke-width="1"/>
<line x1="471.6" y1="669" x2="471.6" y2="672.5" stroke-width="1"/>
<line x1="488.7" y1="669" x2="488.7" y2="674.5"/>
<line x1="505.8" y1="669" x2="505.8" y2="672.5" stroke-width="1"/>
<line x1="522.9" y1="669" x2="522.9" y2="672.5" stroke-width="1"/>
<line x1="540" y1="669" x2="540" y2="672.5" stroke-width="1"/>
<line x1="557.1" y1="669" x2="557.1" y2="674.5"/>
<line x1="574.2" y1="669" x2="574.2" y2="672.5" stroke-width="1"/>
<line x1="591.3" y1="669" x2="591.3" y2="672.5" stroke-width="1"/>
<line x1="608.4" y1="669" x2="608.4" y2="672.5" stroke-width="1"/>
<line x1="625.5" y1="669" x2="625.5" y2="674.5"/>
<line x1="642.6" y1="669" x2="642.6" y2="672.5" stroke-width="1"/>
<line x1="659.7" y1="669" x2="659.7" y2="672.5" stroke-width="1"/>
<line x1="676.8" y1="669" x2="676.8" y2="672.5" stroke-width="1"/>
<line x1="693.9" y1="669" x2="693.9" y2="674.5"/>
<line x1="711" y1="669" x2="711" y2="672.5" stroke-width="1"/>
<line x1="728.1" y1="669" x2="728.1" y2="672.5" stroke-width="1"/>
<line x1="745.2" y1="669" x2="745.2" y2="672.5" stroke-width="1"/>
<line x1="762.3" y1="669" x2="762.3" y2="674.5"/>
<line x1="779.4" y1="669" x2="779.4" y2="672.5" stroke-width="1"/>
<line x1="796.5" y1="669" x2="796.5" y2="672.5" stroke-width="1"/>
<line x1="813.6" y1="669" x2="813.6" y2="672.5" stroke-width="1"/>
<line x1="830.7" y1="669" x2="830.7" y2="674.5"/>
<line x1="847.8" y1="669" x2="847.8" y2="672.5" stroke-width="1"/>
<line x1="864.9" y1="669" x2="864.9" y2="672.5" stroke-width="1"/>
<line x1="882" y1="669" x2="882" y2="672.5" stroke-width="1"/>
<line x1="899.1" y1="669" x2="899.1" y2="674.5"/>
</g>
<line x1="339.6" y1="669" x2="339.6" y2="674.5" stroke="#b8b8b8" stroke-width="1.4"/>
<line x1="755.2" y1="669" x2="755.2" y2="674.5" stroke="#b8b8b8" stroke-width="1.4"/>
<text x="145.8" y="683.5" fill="#0000ff" font-size="8.5" text-anchor="middle" letter-spacing="-0.7">02</text>
<text x="214.2" y="683.5" fill="#0000ff" font-size="8.5" text-anchor="middle" letter-spacing="-0.7">04</text>
<text x="282.6" y="683.5" fill="#0000ff" font-size="8.5" text-anchor="middle" letter-spacing="-0.7">06</text>
<text x="351" y="683.5" fill="#0000ff" font-size="8.5" text-anchor="middle" letter-spacing="-0.7">08</text>
<text x="419.4" y="683.5" fill="#0000ff" font-size="8.5" text-anchor="middle" letter-spacing="-0.7">10</text>
<text x="487.8" y="683.5" fill="#0000ff" font-size="8.5" text-anchor="middle" letter-spacing="-0.7">12</text>
<text x="556.2" y="683.5" fill="#0000ff" font-size="8.5" text-anchor="middle" letter-spacing="-0.7">14</text>
<text x="624.6" y="683.5" fill="#0000ff" font-size="8.5" text-anchor="middle" letter-spacing="-0.7">16</text>
<text x="693" y="683.5" fill="#0000ff" font-size="8.5" text-anchor="middle" letter-spacing="-0.7">18</text>
<text x="761.4" y="683.5" fill="#0000ff" font-size="8.5" text-anchor="middle" letter-spacing="-0.7">20</text>
<text x="829.8" y="683.5" fill="#0000ff" font-size="8.5" text-anchor="middle" letter-spacing="-0.7">22</text>
<text x="898.2" y="683.5" fill="#0000ff" font-size="8.5" text-anchor="middle" letter-spacing="-0.7">00</text>
<text x="337.5" y="683.5" fill="#0000ff" font-size="8.5" text-anchor="middle" textLength="29.5" lengthAdjust="spacingAndGlyphs">Sun Rise</text>
<text x="753" y="683.5" fill="#0000ff" font-size="8.5" text-anchor="middle" textLength="26" lengthAdjust="spacingAndGlyphs">Sun Set</text>
</svg>
</body></html>
